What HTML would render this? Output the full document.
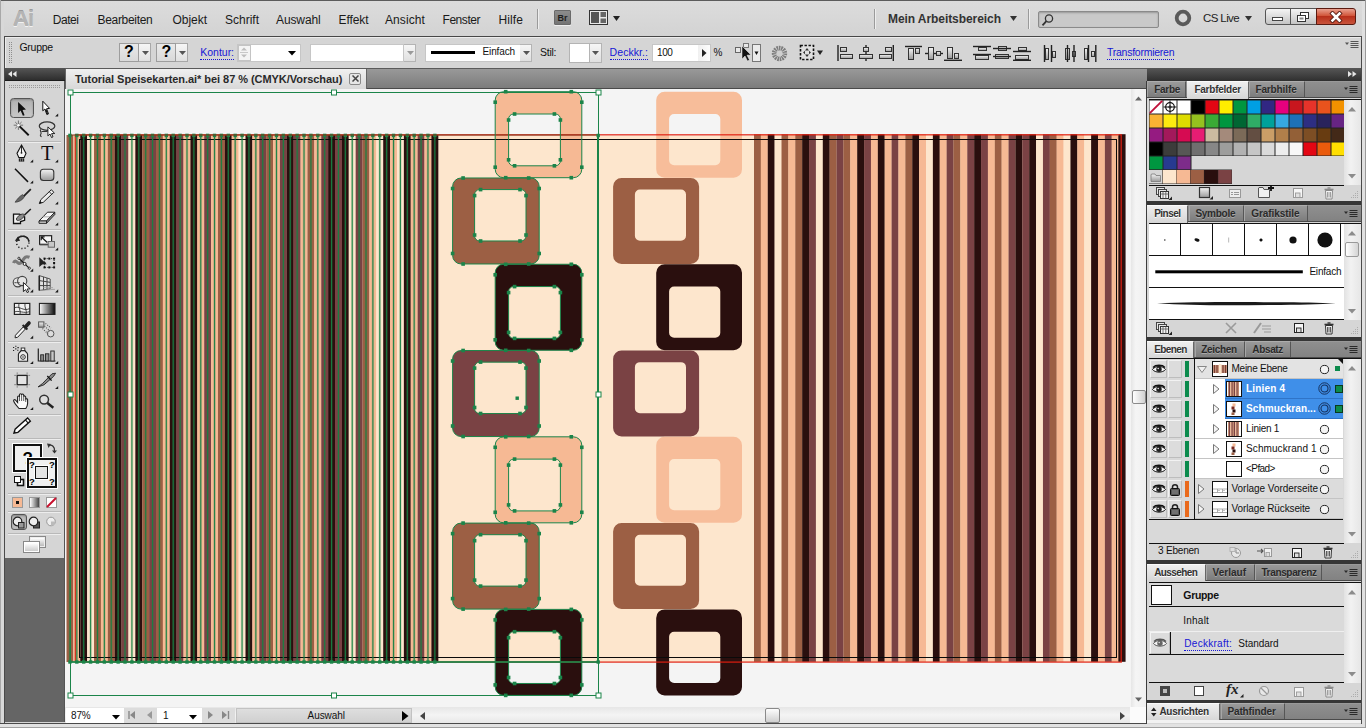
<!DOCTYPE html><html lang="de"><head><meta charset="utf-8"><title>Tutorial Speisekarten.ai</title><style>
*{box-sizing:border-box;margin:0;padding:0}
html,body{width:1366px;height:728px;overflow:hidden;background:#d6d6d6;font-family:"Liberation Sans",sans-serif;font-size:11px;color:#111}
.a{position:absolute}
.t{position:absolute;white-space:nowrap;line-height:1}
.menu{color:#1a1a1a}
.cb{font-size:10.5px;color:#111}
.lnk{color:#1414d8;border-bottom:1px dotted #1414d8;padding-bottom:1px}
.tab{position:absolute;height:17px;font-size:11px;font-weight:bold;color:#2e2e2e;padding-top:3px;text-align:center;letter-spacing:-0.2px;background:linear-gradient(#8e8e8e,#777);border-right:1px solid #5a5a5a;border-top:1px solid #9c9c9c}
.tab.on{background:linear-gradient(#ececec,#d6d6d6);color:#222;border-top:1px solid #f4f4f4;border-right:1px solid #777}
.tabrow{position:absolute;left:1147px;width:214px;height:17px;background:linear-gradient(#858585,#6f6f6f);border-top:1px solid #999}
.pbody{position:absolute;left:1147px;width:214px;background:#d6d6d6}
.gap{position:absolute;left:1147px;width:214px;background:#4a4a4a}
.lrow{position:absolute;left:1149px;width:194px;height:20px}
.ltxt{position:absolute;white-space:nowrap;line-height:1;font-size:11px;top:5px;color:#111}
.wf{position:absolute;background:#fff;border:1px solid #b4b4b4;border-top-color:#9a9a9a}
.dd{position:absolute;background:linear-gradient(#fafafa,#e2e2e2);border:1px solid #b4b4b4}
</style></head><body>
<div class="a" style="left:0px;top:0px;width:1366px;height:728px;background:#d6d6d6"></div>
<div class="a" style="left:0px;top:0px;width:1366px;height:1px;background:#5c5c5c"></div>
<div class="a" style="left:0px;top:1px;width:1366px;height:35px;background:linear-gradient(#dcdcdc,#d3d3d3)"></div>
<div class="a" style="left:0px;top:36px;width:1366px;height:1px;background:#474747"></div>
<div class="a" style="left:0px;top:37px;width:1366px;height:1px;background:#ececec"></div>
<div class="a" style="left:0px;top:38px;width:1366px;height:30px;background:#d5d5d5"></div>
<div class="t " style="left:13px;top:8px;font-size:22px;font-weight:bold;color:#b4b4b4;letter-spacing:-1px;text-shadow:0 1px 0 #f2f2f2,0 -1px 0 #9a9a9a">Ai</div>
<div class="t menu" style="left:52.8px;top:13.5px;font-size:12px;letter-spacing:-0.48px;">Datei</div>
<div class="t menu" style="left:97.6px;top:13.5px;font-size:12px;letter-spacing:-0.33px;">Bearbeiten</div>
<div class="t menu" style="left:172.5px;top:13.5px;font-size:12px;letter-spacing:-0.03px;">Objekt</div>
<div class="t menu" style="left:225px;top:13.5px;font-size:12px;letter-spacing:-0.00px;">Schrift</div>
<div class="t menu" style="left:276px;top:13.5px;font-size:12px;letter-spacing:-0.11px;">Auswahl</div>
<div class="t menu" style="left:338.5px;top:13.5px;font-size:12px;letter-spacing:-0.08px;">Effekt</div>
<div class="t menu" style="left:385px;top:13.5px;font-size:12px;letter-spacing:0.09px;">Ansicht</div>
<div class="t menu" style="left:442.5px;top:13.5px;font-size:12px;letter-spacing:-0.45px;">Fenster</div>
<div class="t menu" style="left:498.5px;top:13.5px;font-size:12px;letter-spacing:0.10px;">Hilfe</div>
<div class="a" style="left:537px;top:9px;width:1px;height:20px;background:#9a9a9a"></div>
<div class="a" style="left:538px;top:9px;width:1px;height:20px;background:#eee"></div>
<div class="a" style="left:554px;top:10px;width:17px;height:15px;background:linear-gradient(#8c8c8c,#747474);border:1px solid #6a6a6a;border-radius:1px;box-shadow:0 1px 0 #eee"></div>
<div class="t " style="left:557.5px;top:13.5px;font-size:9px;font-weight:bold;color:#1e1e1e">Br</div>
<svg class="a" style="left:589px;top:10px" width="19" height="15" viewBox="0 0 19 15"><rect x="0.5" y="0.5" width="18" height="14" fill="#e8e8e8" stroke="#333"/><rect x="2" y="2" width="8" height="11" fill="#555"/><rect x="11.5" y="2" width="5.5" height="5" fill="#666"/><rect x="11.5" y="8.5" width="5.5" height="4.5" fill="#666"/></svg>
<svg class="a" style="left:613px;top:16px" width="8" height="5"><path d="M0 0H7L3.5 5Z" fill="#222"/></svg>
<div class="a" style="left:874px;top:9px;width:1px;height:20px;background:#9a9a9a"></div>
<div class="a" style="left:875px;top:9px;width:1px;height:20px;background:#eee"></div>
<div class="t " style="left:888px;top:13px;font-size:12px;font-weight:bold;letter-spacing:-0.07px;color:#333">Mein Arbeitsbereich</div>
<svg class="a" style="left:1010px;top:16px" width="8" height="5"><path d="M0 0H7L3.5 5Z" fill="#333"/></svg>
<div class="a" style="left:1028px;top:9px;width:1px;height:20px;background:#9a9a9a"></div>
<div class="a" style="left:1029px;top:9px;width:1px;height:20px;background:#eee"></div>
<div class="a" style="left:1038px;top:11px;width:121px;height:17px;background:#c9c9c9;border:1px solid #8a8a8a;border-radius:2px;box-shadow:inset 0 1px 2px #999"></div>
<svg class="a" style="left:1041px;top:13px" width="14" height="14" viewBox="0 0 14 14"><circle cx="8" cy="5.5" r="3.6" fill="none" stroke="#333" stroke-width="1.3"/><path d="M5.4 8.2L1.5 12.4" stroke="#333" stroke-width="1.8"/></svg>
<svg class="a" style="left:1173px;top:8px" width="20" height="20" viewBox="0 0 20 20"><circle cx="10" cy="10" r="6.300" fill="none" stroke="#5a5a5a" stroke-width="3.800"/></svg>
<div class="t " style="left:1203px;top:13px;font-size:11.5px;letter-spacing:-0.60px;color:#222">CS Live</div>
<svg class="a" style="left:1245px;top:16px" width="8" height="5"><path d="M0 0H7L3.5 5Z" fill="#333"/></svg>
<div class="a" style="left:1265px;top:8px;width:26px;height:17px;background:linear-gradient(#f4f4f4,#c4c4c4);border:1px solid #555;border-radius:3px 0 0 3px"></div>
<div class="a" style="left:1290px;top:8px;width:27px;height:17px;background:linear-gradient(#f4f4f4,#c4c4c4);border:1px solid #555"></div>
<div class="a" style="left:1316px;top:8px;width:40px;height:17px;background:linear-gradient(#e9a08f,#d1553a 45%,#b8301b 50%,#c8543c);border:1px solid #5a1a10;border-radius:0 3px 3px 0"></div>
<div class="a" style="left:1272px;top:17px;width:11px;height:4px;background:#fff;border:1px solid #444"></div>
<svg class="a" style="left:1296px;top:11px" width="14" height="12" viewBox="0 0 14 12"><rect x="4.5" y="1.5" width="8" height="6" fill="#fff" stroke="#333"/><rect x="1.5" y="4.5" width="8" height="6" fill="#fff" stroke="#333"/><rect x="3.5" y="6.5" width="4" height="2" fill="#888" stroke="none"/></svg>
<svg class="a" style="left:1329px;top:11px" width="14" height="12" viewBox="0 0 14 12"><path d="M3.500 2.500L10.500 9.500M10.500 2.500L3.500 9.500" stroke="#5a2018" stroke-width="4.400" stroke-linecap="square"/><path d="M3.500 2.500L10.500 9.500M10.500 2.500L3.500 9.500" stroke="#fff" stroke-width="2.600" stroke-linecap="square"/></svg>
<div class="a" style="left:5px;top:38px;width:1px;height:30px;background:#ececec"></div>
<div class="a" style="left:9px;top:42px;width:4px;height:22px;background-image:linear-gradient(90deg,#8e8e8e 1px,transparent 1px);background-size:2px 2px;-webkit-mask-image:linear-gradient(#8e8e8e 1px,transparent 1px);-webkit-mask-size:2px 2px;mask-image:linear-gradient(#000 1px,transparent 1px);mask-size:2px 2px"></div>
<div class="t " style="left:19.4px;top:42px;font-size:10.5px;letter-spacing:-0.24px;color:#111">Gruppe</div>
<div class="a" style="left:118.5px;top:43px;width:20px;height:19px;background:linear-gradient(#e9e9e9,#d9d9d9);border:1px solid #9d9d9d"></div>
<div class="t " style="left:124.0px;top:44px;font-size:16px;font-weight:bold;color:#000">?</div>
<div class="a" style="left:138.5px;top:43px;width:12px;height:19px;background:linear-gradient(#f6f6f6,#e0e0e0);border:1px solid #a8a8a8;border-left:none"></div>
<svg class="a" style="left:141.5px;top:51px" width="7" height="4"><path d="M0 0H7L3.5 4Z" fill="#555"/></svg>
<div class="a" style="left:156px;top:43px;width:20px;height:19px;background:linear-gradient(#e9e9e9,#d9d9d9);border:1px solid #9d9d9d"></div>
<div class="t " style="left:161.5px;top:44px;font-size:16px;font-weight:bold;color:#000">?</div>
<div class="a" style="left:176px;top:43px;width:12px;height:19px;background:linear-gradient(#f6f6f6,#e0e0e0);border:1px solid #a8a8a8;border-left:none"></div>
<svg class="a" style="left:179px;top:51px" width="7" height="4"><path d="M0 0H7L3.5 4Z" fill="#555"/></svg>
<div class="t " style="left:200.3px;top:47px;font-size:10.5px;letter-spacing:-0.02px;color:#1515d5;border-bottom:1px dotted #1515d5;padding-bottom:1px">Kontur:</div>
<div class="a" style="left:236.5px;top:43.5px;width:64px;height:18px;background:#fff;border:1px solid #c6c6c6"></div>
<div class="a" style="left:237.5px;top:44.5px;width:13px;height:16px;background:#f4f4f4;border:1px solid #c4c4c4"></div>
<svg class="a" style="left:240px;top:46px" width="8" height="13" viewBox="0 0 8 13"><path d="M1 4.5L4 1.5L7 4.5Z M1 8.5L4 11.5L7 8.5Z" fill="#bdbdbd"/><path d="M0 6.5H8" stroke="#c8c8c8"/></svg>
<svg class="a" style="left:288px;top:51px" width="8" height="5"><path d="M0 0H8L4 4.5Z" fill="#000"/></svg>
<div class="a" style="left:310.4px;top:43.5px;width:94px;height:18px;background:#fff;border:1px solid #c6c6c6"></div>
<div class="a" style="left:404px;top:43.5px;width:12px;height:18px;background:linear-gradient(#f6f6f6,#e0e0e0);border:1px solid #b4b4b4;border-left:none"></div>
<svg class="a" style="left:406.5px;top:51px" width="7" height="4"><path d="M0 0H7L3.5 4Z" fill="#9a9a9a"/></svg>
<div class="a" style="left:425px;top:43.5px;width:96px;height:18px;background:#fff;border:1px solid #c6c6c6"></div>
<div class="a" style="left:431px;top:51px;width:44px;height:3px;background:#000"></div>
<div class="t " style="left:482.5px;top:47px;font-size:10px;letter-spacing:-0.12px;">Einfach</div>
<div class="a" style="left:520px;top:43.5px;width:12px;height:18px;background:linear-gradient(#f6f6f6,#e0e0e0);border:1px solid #b4b4b4;border-left:none"></div>
<svg class="a" style="left:522.5px;top:51px" width="7" height="4"><path d="M0 0H7L3.5 4Z" fill="#555"/></svg>
<div class="t " style="left:540px;top:47px;font-size:10.5px;letter-spacing:-0.26px;">Stil:</div>
<div class="a" style="left:569.4px;top:42.5px;width:21px;height:20px;background:#fff;border:1px solid #b4b4b4"></div>
<div class="a" style="left:589.5px;top:42.5px;width:12px;height:20px;background:linear-gradient(#f6f6f6,#e0e0e0);border:1px solid #b4b4b4;border-left:none"></div>
<svg class="a" style="left:592px;top:51px" width="7" height="4"><path d="M0 0H7L3.5 4Z" fill="#555"/></svg>
<div class="t " style="left:609.6px;top:47px;font-size:10.5px;letter-spacing:0.07px;color:#1515d5;border-bottom:1px dotted #1515d5;padding-bottom:1px">Deckkr.:</div>
<div class="a" style="left:651.5px;top:43.5px;width:59px;height:18px;background:#fff;border:1px solid #c6c6c6"></div>
<div class="t " style="left:657px;top:47.5px;font-size:10px;letter-spacing:-0.40px;">100</div>
<div class="a" style="left:698px;top:44.5px;width:12px;height:16px;background:linear-gradient(90deg,#f0f0f0,#fdfdfd)"></div>
<svg class="a" style="left:702px;top:49px" width="5" height="8"><path d="M0 0L4.5 4L0 8Z" fill="#222"/></svg>
<div class="t " style="left:713.6px;top:47.5px;font-size:10px;letter-spacing:0.51px;">%</div>
<svg class="a" style="left:734px;top:43px" width="28" height="20" viewBox="0 0 28 20"><rect x="1.5" y="4.5" width="5" height="5" fill="#e8e8e8" stroke="#666"/><rect x="9.5" y="0.5" width="5" height="4" fill="#e8e8e8" stroke="#777"/><path d="M8 3L8 16L11 13L13.5 18L15.5 17L13 12.2L17 12Z" fill="#111" stroke="#eee" stroke-width=".5"/><rect x="18.5" y="1.5" width="8" height="17" fill="#ececec" stroke="#777"/><path d="M20.500 8.500H24.500L22.500 12Z" fill="#111"/></svg>
<svg class="a" style="left:771px;top:45px" width="17" height="17" viewBox="0 0 17 17"><circle cx="8.5" cy="8.5" r="5.400" fill="none" stroke="#7c7c7c" stroke-width="4.600" stroke-dasharray="1.500 .7"/><circle cx="8.5" cy="8.5" r="2.600" fill="#cfcfcf"/></svg>
<svg class="a" style="left:799px;top:44px" width="26" height="17" viewBox="0 0 26 17"><rect x="1.5" y="1.5" width="13" height="14" fill="#e0e0e0" stroke="#111" stroke-width="1.6" stroke-dasharray="2.4 1.6"/><path d="M8 4L10 6.5H6Z M8 13L10 10.5H6Z M4 8.5L6 6.8V10.2Z M12 8.5L10 6.8V10.2Z" fill="#333"/><path d="M18 6.5H24L21 11Z" fill="#222"/></svg>
<svg width="0" height="0" style="position:absolute"><defs><linearGradient id="gb" x1="0" y1="0" x2="0" y2="1"><stop offset="0" stop-color="#f4f4f4"/><stop offset="1" stop-color="#9a9a9a"/></linearGradient></defs></svg>
<svg class="a" style="left:837px;top:45px" width="17" height="17" viewBox="0 0 17 17"><path d="M1 0L1 16" stroke="#222" stroke-width="1.4"/><rect x="3.5" y="2.5" width="6" height="4" fill="url(#gb)" stroke="#333" stroke-width="1"/><rect x="3.5" y="9.5" width="12" height="4" fill="url(#gb)" stroke="#333" stroke-width="1"/></svg>
<svg class="a" style="left:858px;top:45px" width="17" height="17" viewBox="0 0 17 17"><path d="M8 0L8 16" stroke="#222" stroke-width="1.4"/><rect x="5.5" y="2.5" width="5" height="4" fill="url(#gb)" stroke="#333" stroke-width="1"/><rect x="1.5" y="9.5" width="13" height="4" fill="url(#gb)" stroke="#333" stroke-width="1"/></svg>
<svg class="a" style="left:878px;top:45px" width="17" height="17" viewBox="0 0 17 17"><path d="M15.3 0L15.3 16" stroke="#222" stroke-width="1.4"/><rect x="7.5" y="2.5" width="6" height="4" fill="url(#gb)" stroke="#333" stroke-width="1"/><rect x="1.5" y="9.5" width="12" height="4" fill="url(#gb)" stroke="#333" stroke-width="1"/></svg>
<svg class="a" style="left:905px;top:45px" width="17" height="17" viewBox="0 0 17 17"><path d="M0 1.5L17 1.5" stroke="#222" stroke-width="1.4"/><rect x="3.5" y="3.5" width="5" height="11" fill="url(#gb)" stroke="#333" stroke-width="1"/><rect x="10.5" y="3.5" width="4" height="5" fill="url(#gb)" stroke="#333" stroke-width="1"/></svg>
<svg class="a" style="left:925px;top:45px" width="18" height="17" viewBox="0 0 18 17"><path d="M0 8.5L18 8.5" stroke="#222" stroke-width="1.4"/><rect x="3.5" y="2.5" width="5" height="12" fill="url(#gb)" stroke="#333" stroke-width="1"/><rect x="11.5" y="6.5" width="4" height="4" fill="url(#gb)" stroke="#333" stroke-width="1"/></svg>
<svg class="a" style="left:944px;top:45px" width="18" height="17" viewBox="0 0 18 17"><path d="M0 15.3L18 15.3" stroke="#222" stroke-width="1.4"/><rect x="3.5" y="2.5" width="5" height="11" fill="url(#gb)" stroke="#333" stroke-width="1"/><rect x="10.5" y="8.5" width="4" height="5" fill="url(#gb)" stroke="#333" stroke-width="1"/></svg>
<svg class="a" style="left:973px;top:45px" width="18" height="17" viewBox="0 0 18 17"><path d="M0 1.5L18 1.5" stroke="#222" stroke-width="1.4"/><rect x="5.5" y="2.5" width="8" height="3" fill="url(#gb)" stroke="#333" stroke-width="1"/><path d="M0 9.5L18 9.5" stroke="#222" stroke-width="1.4"/><rect x="2.5" y="10.5" width="13" height="4" fill="url(#gb)" stroke="#333" stroke-width="1"/></svg>
<svg class="a" style="left:993px;top:45px" width="18" height="17" viewBox="0 0 18 17"><rect x="5.5" y="1.5" width="8" height="4" fill="url(#gb)" stroke="#333" stroke-width="1"/><path d="M0 3.5L18 3.5" stroke="#222" stroke-width="1.4"/><rect x="2.5" y="9.5" width="13" height="4" fill="url(#gb)" stroke="#333" stroke-width="1"/><path d="M0 11.5L18 11.5" stroke="#222" stroke-width="1.4"/></svg>
<svg class="a" style="left:1013px;top:45px" width="18" height="17" viewBox="0 0 18 17"><rect x="5.5" y="2.5" width="8" height="3" fill="url(#gb)" stroke="#333" stroke-width="1"/><path d="M0 6.5L18 6.5" stroke="#222" stroke-width="1.4"/><rect x="2.5" y="10.5" width="13" height="4" fill="url(#gb)" stroke="#333" stroke-width="1"/><path d="M0 15.3L18 15.3" stroke="#222" stroke-width="1.4"/></svg>
<svg class="a" style="left:1043px;top:45px" width="14" height="17" viewBox="0 0 14 17"><path d="M1.5 0L1.5 17" stroke="#222" stroke-width="1.4"/><rect x="2.5" y="3.5" width="3" height="11" fill="url(#gb)" stroke="#333" stroke-width="1"/><path d="M8.5 0L8.5 17" stroke="#222" stroke-width="1.4"/><rect x="9.5" y="6.5" width="3" height="6" fill="url(#gb)" stroke="#333" stroke-width="1"/></svg>
<svg class="a" style="left:1063px;top:45px" width="14" height="17" viewBox="0 0 14 17"><rect x="2.5" y="3.5" width="4" height="11" fill="url(#gb)" stroke="#333" stroke-width="1"/><path d="M4.5 0L4.5 17" stroke="#222" stroke-width="1.4"/><rect x="9.5" y="6.5" width="3" height="5" fill="url(#gb)" stroke="#333" stroke-width="1"/><path d="M11 0L11 17" stroke="#222" stroke-width="1.4"/></svg>
<svg class="a" style="left:1083px;top:45px" width="15" height="17" viewBox="0 0 15 17"><rect x="1.5" y="3.5" width="3" height="11" fill="url(#gb)" stroke="#333" stroke-width="1"/><path d="M5.5 0L5.5 17" stroke="#222" stroke-width="1.4"/><rect x="8.5" y="6.5" width="3" height="5" fill="url(#gb)" stroke="#333" stroke-width="1"/><path d="M12.8 0L12.8 17" stroke="#222" stroke-width="1.4"/></svg>
<div class="t " style="left:1107px;top:47px;font-size:10.5px;letter-spacing:-0.25px;color:#1515d5;border-bottom:1px dotted #1515d5;padding-bottom:1px">Transformieren</div>
<svg class="a" style="left:1345px;top:41px" width="14" height="8" viewBox="0 0 14 8"><path d="M0 1.5H4L2 4Z" fill="#555"/><path d="M5.5 .5H13.5M5.5 2.5H13.5M5.5 4.5H13.5M5.5 6.5H13.5" stroke="#555" stroke-width="1"/></svg>
<div class="a" style="left:0px;top:68px;width:1366px;height:20px;background:linear-gradient(#9a9a9a,#7c7c7c)"></div>
<div class="a" style="left:0px;top:88px;width:1366px;height:1px;background:#4a4a4a"></div>
<div class="a" style="left:5px;top:68px;width:1356px;height:1px;background:#5a5a5a"></div>
<div class="a" style="left:0px;top:0px;width:1px;height:728px;background:#a8a8a8"></div>
<div class="a" style="left:1px;top:1px;width:3px;height:727px;background:#d8d8d8"></div>
<div class="a" style="left:4px;top:36px;width:1px;height:688px;background:#4a4a4a"></div>
<div class="a" style="left:64.5px;top:69px;width:302px;height:19.5px;background:linear-gradient(#f0f0f0,#d8d8d8);border-right:1px solid #666;border-left:1px solid #666"></div>
<div class="t " style="left:75px;top:73.5px;font-size:11px;font-weight:bold;letter-spacing:-0.05px;color:#2a2a2a">Tutorial Speisekarten.ai* bei 87 % (CMYK/Vorschau)</div>
<div class="a" style="left:349px;top:72.5px;width:12px;height:12px;border:1px solid #8a8a8a;background:#e6e6e6;border-radius:2px"></div>
<svg class="a" style="left:351.5px;top:75px" width="7" height="7"><path d="M.5 .5L6.5 6.5M6.5 .5L.5 6.5" stroke="#444" stroke-width="1.5"/></svg>
<div class="a" style="left:5px;top:68px;width:59.5px;height:13px;background:linear-gradient(#555,#2e2e2e);border-bottom:1px solid #1c1c1c"></div>
<svg class="a" style="left:8px;top:71px" width="9" height="7"><path d="M4 0V6L0 3Z M8.5 0V6L4.5 3Z" fill="#e8e8e8"/></svg>
<div class="a" style="left:5px;top:81px;width:59.5px;height:477px;background:#d5d5d5"></div>
<div class="a" style="left:5px;top:558px;width:59.5px;height:164px;background:#656565"></div>
<div class="a" style="left:64px;top:81px;width:1px;height:641px;background:#555"></div>
<div class="a" style="left:9px;top:85px;width:52px;height:4px;background-image:linear-gradient(90deg,#9a9a9a 1px,transparent 1px);background-size:2px 2px;-webkit-mask-image:linear-gradient(#9a9a9a 1px,transparent 1px);-webkit-mask-size:2px 2px;mask-image:linear-gradient(#000 1px,transparent 1px);mask-size:2px 2px"></div>
<div class="a" style="left:8px;top:140.5px;width:53px;height:1px;background:#b9b9b9"></div>
<div class="a" style="left:8px;top:141.5px;width:53px;height:1px;background:#ededed"></div>
<div class="a" style="left:8px;top:228.5px;width:53px;height:1px;background:#b9b9b9"></div>
<div class="a" style="left:8px;top:229.5px;width:53px;height:1px;background:#ededed"></div>
<div class="a" style="left:8px;top:295px;width:53px;height:1px;background:#b9b9b9"></div>
<div class="a" style="left:8px;top:296px;width:53px;height:1px;background:#ededed"></div>
<div class="a" style="left:8px;top:340.5px;width:53px;height:1px;background:#b9b9b9"></div>
<div class="a" style="left:8px;top:341.5px;width:53px;height:1px;background:#ededed"></div>
<div class="a" style="left:8px;top:366.5px;width:53px;height:1px;background:#b9b9b9"></div>
<div class="a" style="left:8px;top:367.5px;width:53px;height:1px;background:#ededed"></div>
<div class="a" style="left:8px;top:413.5px;width:53px;height:1px;background:#b9b9b9"></div>
<div class="a" style="left:8px;top:414.5px;width:53px;height:1px;background:#ededed"></div>
<div class="a" style="left:8px;top:437.5px;width:53px;height:1px;background:#b9b9b9"></div>
<div class="a" style="left:8px;top:438.5px;width:53px;height:1px;background:#ededed"></div>
<div class="a" style="left:8px;top:493px;width:53px;height:1px;background:#b9b9b9"></div>
<div class="a" style="left:8px;top:494px;width:53px;height:1px;background:#ededed"></div>
<div class="a" style="left:8px;top:511px;width:53px;height:1px;background:#b9b9b9"></div>
<div class="a" style="left:8px;top:512px;width:53px;height:1px;background:#ededed"></div>
<div class="a" style="left:8px;top:533px;width:53px;height:1px;background:#b9b9b9"></div>
<div class="a" style="left:8px;top:534px;width:53px;height:1px;background:#ededed"></div>
<div class="a" style="left:10.2px;top:98.1px;width:23.7px;height:19.6px;background:linear-gradient(#b2b2b2,#c8c8c8);border:1px solid #555;border-radius:3.5px;box-shadow:inset 0 1px 2px #8a8a8a"></div>
<svg class="a" style="left:5px;top:81px" width="59" height="477" viewBox="5 81 59 477"><defs><linearGradient id="gh"><stop offset="0" stop-color="#fff"/><stop offset="1" stop-color="#0a0a0a"/></linearGradient></defs><path d="M58.2 113.5V116.6H55.1Z" fill="#1a1a1a"/><path d="M33.2 159.5V162.6H30.1Z" fill="#1a1a1a"/><path d="M58.2 159.5V162.6H55.1Z" fill="#1a1a1a"/><path d="M33.2 180.5V183.6H30.1Z" fill="#1a1a1a"/><path d="M58.2 180.5V183.6H55.1Z" fill="#1a1a1a"/><path d="M58.2 201.5V204.6H55.1Z" fill="#1a1a1a"/><path d="M58.2 222.5V225.6H55.1Z" fill="#1a1a1a"/><path d="M33.2 247.5V250.6H30.1Z" fill="#1a1a1a"/><path d="M58.2 247.5V250.6H55.1Z" fill="#1a1a1a"/><path d="M33.2 268.59999999999997V271.7H30.1Z" fill="#1a1a1a"/><path d="M33.2 289.29999999999995V292.4H30.1Z" fill="#1a1a1a"/><path d="M58.2 289.29999999999995V292.4H55.1Z" fill="#1a1a1a"/><path d="M33.2 335.59999999999997V338.7H30.1Z" fill="#1a1a1a"/><path d="M33.2 360.9V364H30.1Z" fill="#1a1a1a"/><path d="M58.2 360.9V364H55.1Z" fill="#1a1a1a"/><path d="M58.2 385.9V389H55.1Z" fill="#1a1a1a"/><path d="M33.2 406.9V410H30.1Z" fill="#1a1a1a"/><path d="M18.1 101.9V112.9L20.6 110.6L22.9 115.8L24.6 115.2L22.6 110L26 109.6Z" fill="#111"/><path d="M42.8 101.2V110.8L44.9 109L46.8 114.5L48.5 113.9L46.6 108.7L49.6 108.4Z" fill="#fff" stroke="#111" stroke-width="1"/><path d="M45.3 109.5L46.9 114.2L48.1 113.8L46.5 109.2Z" fill="#111"/><path d="M18.4 120.5V129.9M13.7 125.2H23.1M15.2 122L21.6 128.4M21.6 122L15.2 128.4" stroke="#666" stroke-width=".9"/><circle cx="18.4" cy="125.2" r="1.3" fill="#fff"/><path d="M19.6 126.4L28.7 135.2" stroke="#111" stroke-width="1.9"/><ellipse cx="47.05" cy="126.1" rx="7.8" ry="4.2" fill="none" stroke="#333" stroke-width="1.2"/><path d="M40.8 129.3C39 131 42.4 132.4 40.8 134.2C40 135.4 40.4 136.4 41.6 136.6" fill="none" stroke="#333" stroke-width="1.1"/><path d="M41.5 131.5H47.5" stroke="#333" stroke-width="1"/><path d="M47.9 126.9V135.9L50 134L51.5 137.5L53 136.9L51.6 133.6L54.8 133.5Z" fill="#fff" stroke="#111" stroke-width=".9"/><path d="M21.5 145.1L26 153.4L24.2 157.5H18.8L17 153.4Z" fill="#f4f4f4" stroke="#111" stroke-width="1.1"/><path d="M21.5 146V152" stroke="#111" stroke-width=".9"/><circle cx="21.5" cy="152.8" r=".9" fill="#111"/><rect x="18.8" y="158.300" width="5.400" height="3.300" fill="#222"/><path d="M20.5 158.300V161.600M22.500 158.300V161.600" stroke="#aaa" stroke-width=".6"/><text x="41" y="160.200" font-family="Liberation Serif,serif" font-size="20.300" fill="#111">T</text><path d="M15 168.8L28 181.9" stroke="#111" stroke-width="1.5"/><rect x="40.400" y="169.200" width="13.400" height="11.300" rx="3" fill="url(#gb)" stroke="#333" stroke-width="1.1"/><path d="M30.8 189.100L23.600 196.300" stroke="#222" stroke-width="1.800"/><path d="M24.600 196.400L22.600 194.600C19.500 196 17 199.500 15 202.200C18.500 202.200 22.800 200.200 24.600 196.400Z" fill="#666" stroke="#333" stroke-width=".6"/><path d="M51.400 189.700L53.800 192.300L43.300 202.300L39.300 203.600L40.800 199.700Z" fill="#ececec" stroke="#222" stroke-width="1"/><path d="M39.300 203.600L40.300 201L42 202.700Z" fill="#111"/><path d="M49.300 191.700L51.700 194.300" stroke="#222" stroke-width=".9"/><path d="M13.500 214.200H19.500L24.600 216.800V220.300L20.500 221.600V223.500H13.500Z" fill="#f2f2f2" stroke="#111" stroke-width="1.300"/><ellipse cx="20.300" cy="217.300" rx="4.600" ry="2.100" transform="rotate(-35 20.300 217.300)" fill="#8a8a8a" stroke="#333" stroke-width=".8"/><path d="M30.800 209L24.500 215" stroke="#222" stroke-width="1.600"/><path d="M39 221L47.500 212.200H54.800L46.500 221Z" fill="#f8f8f8" stroke="#222" stroke-width="1"/><path d="M39 221H46.500V223.300H39Z" fill="#ddd" stroke="#222" stroke-width="1"/><path d="M46.500 221L54.800 212.200V214.500L46.500 223.300Z" fill="#999" stroke="#222" stroke-width="1"/><path d="M43 216.800H50.400" stroke="#999" stroke-width=".8"/><circle cx="22.750" cy="242.400" r="6.200" fill="none" stroke="#222" stroke-width="1.500" stroke-dasharray="1.200 2.050"/><path d="M16.800 240.600A6.200 6.200 0 0 1 28.900 241.600" fill="none" stroke="#222" stroke-width="1.500"/><path d="M14.800 240.800L18.200 236.300L20 241Z" fill="#222"/><rect x="39.600" y="235.700" width="12" height="8.600" fill="#f6f6f6" stroke="#222" stroke-width="1.200"/><path d="M39.600 244.900H51.600" stroke="#555" stroke-width="1"/><rect x="48.200" y="241.500" width="6.300" height="5.700" fill="#c8c8c8" stroke="#666" stroke-width="1"/><path d="M41.600 237.300L47.300 242.500M41.200 240.300V236.900H44.600" fill="none" stroke="#111" stroke-width="1.200"/><path d="M13.500 263C16 257 18 267 21.500 262C24.500 258 25 255.500 29.500 257.300" fill="none" stroke="#7a7a7a" stroke-width="3.200"/><path d="M18.900 258.300L29.400 268.300" stroke="#111" stroke-width="1.100"/><circle cx="18.900" cy="258.300" r="1.100" fill="#eee" stroke="#111" stroke-width=".8"/><circle cx="24.600" cy="263.900" r="1.500" fill="#fff" stroke="#111" stroke-width=".9"/><circle cx="29.300" cy="268.200" r="1.100" fill="#eee" stroke="#111" stroke-width=".8"/><rect x="44.500" y="258.600" width="9.600" height="8.800" fill="none" stroke="#111" stroke-width=".9" stroke-dasharray="1 1.200"/><rect x="43.5" y="257.6" width="2" height="2" fill="#111"/><rect x="43.5" y="262.0" width="2" height="2" fill="#111"/><rect x="43.5" y="266.4" width="2" height="2" fill="#111"/><rect x="48.3" y="257.6" width="2" height="2" fill="#111"/><rect x="48.3" y="266.4" width="2" height="2" fill="#111"/><rect x="53.1" y="257.6" width="2" height="2" fill="#111"/><rect x="53.1" y="262.0" width="2" height="2" fill="#111"/><rect x="53.1" y="266.4" width="2" height="2" fill="#111"/><path d="M39.300 257.300V267L42.200 264.600L46.800 264.300Z" fill="#222"/><circle cx="17.800" cy="282.300" r="4.600" fill="#e4e4e4" stroke="#444" stroke-width="1.100"/><circle cx="22.200" cy="281" r="4.600" fill="#e4e4e4" stroke="#444" stroke-width="1.100"/><path d="M14.600 282.600H19.600" stroke="#333" stroke-width="1.300" stroke-dasharray="1.100 .8"/><path d="M23.400 282.500V291.600L25.600 289.600L27.200 292.600L28.600 292L27.100 289L30.200 288.800Z" fill="#fff" stroke="#111" stroke-width=".9"/><path d="M39.300 275.600L50.200 279V288.800L39.300 290.500Z" fill="#e2e2e2" stroke="#444" stroke-width=".9"/><path d="M39.300 280.600L50.200 282.300M39.300 285.600L50.200 285.600M43.500 276.900V289.900M47 278V289.300" stroke="#444" stroke-width="1"/><path d="M39.300 290.500L55 289.300M43 287.700H53" stroke="#999" stroke-width=".8"/><path d="M39.300 275.600V290.500" stroke="#222" stroke-width="1.500"/><rect x="14.400" y="303.400" width="15.400" height="11" fill="#f2f2f2" stroke="#222" stroke-width="1.200"/><path d="M14.400 308C19 305 23 312 29.800 308.500M19 303.400C17.500 307 21.500 311 20 314.400M25 303.400C24 307 27.500 311 26 314.400M14.400 312C19 310 24 314 29.800 311.500" fill="none" stroke="#333" stroke-width=".9"/><rect x="39.400" y="303.400" width="15.600" height="11" fill="url(#gh)" stroke="#222" stroke-width="1.100"/><path d="M23.200 327L25.400 329L17.600 337.300L15.100 337.800L15.400 335.300Z" fill="#f4f4f4" stroke="#222" stroke-width="1"/><path d="M29 323L25.800 326.400" stroke="#222" stroke-width="3.600" stroke-linecap="round"/><path d="M22.600 325.100L27.400 329.500" stroke="#222" stroke-width="2"/><rect x="38.600" y="321.900" width="5.300" height="5.300" fill="url(#gb)" stroke="#555" stroke-width="1"/><circle cx="50.650" cy="333.650" r="3.300" fill="#dcdcdc" stroke="#555" stroke-width="1"/><path d="M45.500 323.500L51 328M42.500 328.500L48.500 334.500M44.500 326L50 331" stroke="#555" stroke-width="1.100" stroke-dasharray="1 1.300"/><path d="M18.400 361.300V354.500C18.400 352.500 20.500 352 21.200 350.600H24.800C25.500 352 27.600 352.500 27.600 354.500V361.300Z" fill="#ececec" stroke="#222" stroke-width="1.100"/><rect x="21.200" y="348" width="3.600" height="2.600" fill="#fff" stroke="#222" stroke-width=".9"/><circle cx="23" cy="357" r="2.300" fill="#fff" stroke="#222" stroke-width="1"/><circle cx="23" cy="357" r=".8" fill="#222"/><path d="M13 347.500H14.200M15.200 346.300H16.400M15.200 348.900H16.400M13 350.500H14.200M17.400 347.600H18.800M17.200 350.200H18.400" stroke="#222" stroke-width="1.100"/><path d="M38.300 348.500V361H55.500" fill="none" stroke="#222" stroke-width="1.200"/><rect x="40.700" y="354.800" width="3" height="6.200" fill="#8a8a8a" stroke="#222" stroke-width=".9"/><rect x="45.500" y="353.800" width="3.400" height="7.200" fill="#8a8a8a" stroke="#222" stroke-width=".9"/><rect x="50.800" y="351" width="3.400" height="10" fill="#c8c8c8" stroke="#222" stroke-width=".9"/><rect x="17.200" y="375.400" width="9.900" height="9.300" fill="#e4e4e4" stroke="#222" stroke-width="1.300"/><path d="M17.200 372.400V374.200M27.100 372.400V374.200M17.200 385.900V387.700M27.100 385.900V387.700M14.200 375.400H16M14.200 384.700H16M28.300 375.400H30.100M28.300 384.700H30.100" stroke="#888" stroke-width="1"/><path d="M55.600 373.200L52 373.800L42.500 383.500L38.100 386.900L44 384.800L53.500 376.500Z" fill="#8a8a8a" stroke="#222" stroke-width=".9"/><path d="M47.300 376L51.600 380.600" stroke="#111" stroke-width="1.300"/><path d="M19 408.500C16.500 405.500 14 402.500 13.600 400.800C13.400 399.600 14.800 399.300 15.600 400.200L17.600 402.600V397C17.600 395.600 19.400 395.600 19.500 397V394.800C19.500 393.300 21.500 393.300 21.600 394.800V394.900C21.700 393.600 23.600 393.600 23.700 395V396.800C23.800 395.600 25.600 395.600 25.700 397V399.500C25.800 398.400 27.500 398.400 27.600 399.600V403.500C27.600 405.500 26.800 407 25.800 408.500Z" fill="#fafafa" stroke="#222" stroke-width="1.100"/><path d="M19.500 397V401M21.600 395V401M23.700 396.500V401M25.700 399V402" stroke="#222" stroke-width=".7"/><circle cx="44.100" cy="399.600" r="4.400" fill="#dedede" stroke="#333" stroke-width="1.500"/><path d="M47.400 403L53.300 407.800" stroke="#222" stroke-width="2.400"/><path d="M27.600 417.900L30.400 421.100L17.900 432.300L13.900 433.100L15.100 429.200Z" fill="#fff" stroke="#111" stroke-width="1.300"/><path d="M25.400 419.900L28.200 423.100" stroke="#111" stroke-width="1.100"/><path d="M13.900 433.100L14.600 430.900L16.200 432.500Z" fill="#111"/></svg>
<div class="a" style="left:13px;top:444px;width:29px;height:28px;background:#f0f0f0;border:2px solid #111;box-shadow:0 0 0 1px #fff"></div>
<div class="t " style="left:22.5px;top:450px;font-size:17px;font-weight:bold;color:#000">?</div>
<div class="a" style="left:26.5px;top:458px;width:30px;height:29.5px;background:#f0f0f0;border:2px solid #111;box-shadow:0 0 0 1px #fff"></div>
<div class="a" style="left:35px;top:466px;width:13px;height:13px;background:#e4e4e4;border:1px solid #111;box-shadow:0 0 0 1px #fff"></div>
<div class="t " style="left:29px;top:459.5px;font-size:9.5px;font-weight:bold;color:#000">?</div>
<div class="t " style="left:49px;top:459.5px;font-size:9.5px;font-weight:bold;color:#000">?</div>
<div class="t " style="left:29px;top:476.5px;font-size:9.5px;font-weight:bold;color:#000">?</div>
<div class="t " style="left:49px;top:476.5px;font-size:9.5px;font-weight:bold;color:#000">?</div>
<svg class="a" style="left:46px;top:442px" width="12" height="12" viewBox="0 0 12 12"><path d="M2.500 3.500C6 2 9 5 8.500 9" fill="none" stroke="#333" stroke-width="1.300"/><path d="M1 1.500L5 2L2.500 6Z M6 8.500H11L8.500 11.500Z" fill="#333"/></svg>
<svg class="a" style="left:13px;top:475px" width="12" height="12" viewBox="0 0 12 12"><rect x="4.500" y="4.500" width="6" height="6" fill="#fff" stroke="#111" stroke-width="1.600"/><rect x="1.500" y="1.500" width="6" height="6" fill="#fff" stroke="#111"/></svg>
<div class="a" style="left:11.5px;top:496.5px;width:11px;height:11px;background:#f6b994;border:1px solid #999"></div>
<div class="a" style="left:15.5px;top:500.5px;width:3px;height:3px;background:#111"></div>
<div class="a" style="left:28.5px;top:496.5px;width:11px;height:11px;background:linear-gradient(90deg,#fff,#444);border:1px solid #999"></div>
<svg class="a" style="left:46px;top:496.500px" width="11" height="11"><rect x=".5" y=".5" width="10" height="10" fill="#fff" stroke="#999"/><path d="M1 10L10 1" stroke="#c8102e" stroke-width="2"/></svg>
<div class="a" style="left:10.5px;top:514px;width:16px;height:16px;background:#bdbdbd;border:1px solid #555;border-radius:3px;box-shadow:inset 0 1px 2px #888"></div>
<svg class="a" style="left:11px;top:514.500px" width="15" height="15" viewBox="0 0 15 15"><circle cx="6.500" cy="6.500" r="4.300" fill="#eee" stroke="#222" stroke-width="1.200"/><rect x="7.500" y="7.500" width="5.500" height="5.500" fill="#999" stroke="#222"/></svg>
<svg class="a" style="left:27px;top:514.500px" width="15" height="15" viewBox="0 0 15 15"><rect x="6.500" y="7" width="6" height="6" fill="#555" stroke="#222"/><circle cx="6.500" cy="6.500" r="4.300" fill="#eee" stroke="#222" stroke-width="1.200"/></svg>
<svg class="a" style="left:44px;top:514.500px" width="15" height="15" viewBox="0 0 15 15"><circle cx="7" cy="6.500" r="4.300" fill="#eee" stroke="#999" stroke-width="1"/><path d="M7 6.500H11.300A4.300 4.300 0 0 1 7 10.800Z" fill="#bbb"/></svg>
<div class="a" style="left:30px;top:537px;width:15px;height:10px;background:linear-gradient(#fff,#bbb);border:1px solid #eee;box-shadow:0 0 0 1px #888"></div>
<div class="a" style="left:23.5px;top:542px;width:15px;height:10px;background:linear-gradient(#fff,#ccc);border:1px solid #fff;box-shadow:0 0 0 1px #888"></div>
<svg class="a" style="left:65px;top:89px" width="1066" height="618" viewBox="65 89 1066 618"><rect x="65" y="89" width="1066" height="618" fill="#f4f4f4"/><rect x="75" y="135.400" width="1046" height="526.600" fill="#fde6cd"/><rect x="66.50" y="135" width="6.935" height="527" fill="#9c5f44"/><rect x="73.39" y="135" width="6.935" height="527" fill="#f6b994"/><rect x="80.27" y="135" width="6.935" height="527" fill="#2a0f0e"/><rect x="87.16" y="135" width="6.935" height="527" fill="#fde6cd"/><rect x="94.04" y="135" width="6.935" height="527" fill="#9c5f44"/><rect x="100.92" y="135" width="6.935" height="527" fill="#f6b994"/><rect x="107.81" y="135" width="6.935" height="527" fill="#9c5f44"/><rect x="114.69" y="135" width="6.935" height="527" fill="#2a0f0e"/><rect x="121.58" y="135" width="6.935" height="527" fill="#7a4244"/><rect x="128.47" y="135" width="6.935" height="527" fill="#fde6cd"/><rect x="135.35" y="135" width="6.935" height="527" fill="#2a0f0e"/><rect x="142.24" y="135" width="6.935" height="527" fill="#9c5f44"/><rect x="149.12" y="135" width="6.935" height="527" fill="#7a4244"/><rect x="156.00" y="135" width="6.935" height="527" fill="#9c5f44"/><rect x="162.89" y="135" width="6.935" height="527" fill="#f6b994"/><rect x="169.77" y="135" width="6.935" height="527" fill="#2a0f0e"/><rect x="176.66" y="135" width="6.935" height="527" fill="#7a4244"/><rect x="183.55" y="135" width="6.935" height="527" fill="#f6b994"/><rect x="190.43" y="135" width="6.935" height="527" fill="#2a0f0e"/><rect x="197.31" y="135" width="6.935" height="527" fill="#f6b994"/><rect x="204.20" y="135" width="6.935" height="527" fill="#7a4244"/><rect x="211.09" y="135" width="6.935" height="527" fill="#f6b994"/><rect x="217.97" y="135" width="6.935" height="527" fill="#9c5f44"/><rect x="224.85" y="135" width="6.935" height="527" fill="#2a0f0e"/><rect x="231.74" y="135" width="6.935" height="527" fill="#f6b994"/><rect x="238.62" y="135" width="6.935" height="527" fill="#fde6cd"/><rect x="245.51" y="135" width="6.935" height="527" fill="#2a0f0e"/><rect x="252.39" y="135" width="6.935" height="527" fill="#f6b994"/><rect x="259.28" y="135" width="6.935" height="527" fill="#7a4244"/><rect x="266.16" y="135" width="6.935" height="527" fill="#9c5f44"/><rect x="273.05" y="135" width="6.935" height="527" fill="#f6b994"/><rect x="279.94" y="135" width="6.935" height="527" fill="#7a4244"/><rect x="286.82" y="135" width="6.935" height="527" fill="#2a0f0e"/><rect x="293.70" y="135" width="6.935" height="527" fill="#7a4244"/><rect x="300.59" y="135" width="6.935" height="527" fill="#f6b994"/><rect x="307.48" y="135" width="6.935" height="527" fill="#9c5f44"/><rect x="314.36" y="135" width="6.935" height="527" fill="#f6b994"/><rect x="321.25" y="135" width="6.935" height="527" fill="#7a4244"/><rect x="328.13" y="135" width="6.935" height="527" fill="#2a0f0e"/><rect x="335.01" y="135" width="6.935" height="527" fill="#7a4244"/><rect x="341.90" y="135" width="6.935" height="527" fill="#2a0f0e"/><rect x="348.78" y="135" width="6.935" height="527" fill="#fde6cd"/><rect x="355.67" y="135" width="6.935" height="527" fill="#7a4244"/><rect x="362.56" y="135" width="6.935" height="527" fill="#9c5f44"/><rect x="369.44" y="135" width="6.935" height="527" fill="#f6b994"/><rect x="376.32" y="135" width="6.935" height="527" fill="#fde6cd"/><rect x="383.21" y="135" width="6.935" height="527" fill="#2a0f0e"/><rect x="390.09" y="135" width="6.935" height="527" fill="#f6b994"/><rect x="396.98" y="135" width="6.935" height="527" fill="#fde6cd"/><rect x="403.87" y="135" width="6.935" height="527" fill="#2a0f0e"/><rect x="410.75" y="135" width="6.935" height="527" fill="#f6b994"/><rect x="417.63" y="135" width="6.935" height="527" fill="#7a4244"/><rect x="424.52" y="135" width="6.935" height="527" fill="#f6b994"/><rect x="431.40" y="135" width="6.935" height="527" fill="#2a0f0e"/><rect x="754.00" y="134.200" width="6.930" height="527.600" fill="#9c5f44"/><rect x="760.88" y="134.200" width="6.930" height="527.600" fill="#f6b994"/><rect x="767.76" y="134.200" width="6.930" height="527.600" fill="#2a0f0e"/><rect x="774.64" y="134.200" width="6.930" height="527.600" fill="#fde6cd"/><rect x="781.52" y="134.200" width="6.930" height="527.600" fill="#9c5f44"/><rect x="788.40" y="134.200" width="6.930" height="527.600" fill="#f6b994"/><rect x="795.28" y="134.200" width="6.930" height="527.600" fill="#9c5f44"/><rect x="802.16" y="134.200" width="6.930" height="527.600" fill="#2a0f0e"/><rect x="809.04" y="134.200" width="6.930" height="527.600" fill="#7a4244"/><rect x="815.92" y="134.200" width="6.930" height="527.600" fill="#fde6cd"/><rect x="822.80" y="134.200" width="6.930" height="527.600" fill="#2a0f0e"/><rect x="829.68" y="134.200" width="6.930" height="527.600" fill="#9c5f44"/><rect x="836.56" y="134.200" width="6.930" height="527.600" fill="#7a4244"/><rect x="843.44" y="134.200" width="6.930" height="527.600" fill="#9c5f44"/><rect x="850.32" y="134.200" width="6.930" height="527.600" fill="#f6b994"/><rect x="857.20" y="134.200" width="6.930" height="527.600" fill="#2a0f0e"/><rect x="864.08" y="134.200" width="6.930" height="527.600" fill="#7a4244"/><rect x="870.96" y="134.200" width="6.930" height="527.600" fill="#f6b994"/><rect x="877.84" y="134.200" width="6.930" height="527.600" fill="#2a0f0e"/><rect x="884.72" y="134.200" width="6.930" height="527.600" fill="#f6b994"/><rect x="891.60" y="134.200" width="6.930" height="527.600" fill="#7a4244"/><rect x="898.48" y="134.200" width="6.930" height="527.600" fill="#f6b994"/><rect x="905.36" y="134.200" width="6.930" height="527.600" fill="#9c5f44"/><rect x="912.24" y="134.200" width="6.930" height="527.600" fill="#2a0f0e"/><rect x="919.12" y="134.200" width="6.930" height="527.600" fill="#f6b994"/><rect x="926.00" y="134.200" width="6.930" height="527.600" fill="#fde6cd"/><rect x="932.88" y="134.200" width="6.930" height="527.600" fill="#2a0f0e"/><rect x="939.76" y="134.200" width="6.930" height="527.600" fill="#f6b994"/><rect x="946.64" y="134.200" width="6.930" height="527.600" fill="#7a4244"/><rect x="953.52" y="134.200" width="6.930" height="527.600" fill="#9c5f44"/><rect x="960.40" y="134.200" width="6.930" height="527.600" fill="#f6b994"/><rect x="967.28" y="134.200" width="6.930" height="527.600" fill="#7a4244"/><rect x="974.16" y="134.200" width="6.930" height="527.600" fill="#2a0f0e"/><rect x="981.04" y="134.200" width="6.930" height="527.600" fill="#7a4244"/><rect x="987.92" y="134.200" width="6.930" height="527.600" fill="#f6b994"/><rect x="994.80" y="134.200" width="6.930" height="527.600" fill="#9c5f44"/><rect x="1001.68" y="134.200" width="6.930" height="527.600" fill="#f6b994"/><rect x="1008.56" y="134.200" width="6.930" height="527.600" fill="#7a4244"/><rect x="1015.44" y="134.200" width="6.930" height="527.600" fill="#2a0f0e"/><rect x="1022.32" y="134.200" width="6.930" height="527.600" fill="#7a4244"/><rect x="1029.20" y="134.200" width="6.930" height="527.600" fill="#2a0f0e"/><rect x="1036.08" y="134.200" width="6.930" height="527.600" fill="#fde6cd"/><rect x="1042.96" y="134.200" width="6.930" height="527.600" fill="#7a4244"/><rect x="1049.84" y="134.200" width="6.930" height="527.600" fill="#9c5f44"/><rect x="1056.72" y="134.200" width="6.930" height="527.600" fill="#f6b994"/><rect x="1063.60" y="134.200" width="6.930" height="527.600" fill="#fde6cd"/><rect x="1070.48" y="134.200" width="6.930" height="527.600" fill="#2a0f0e"/><rect x="1077.36" y="134.200" width="6.930" height="527.600" fill="#f6b994"/><rect x="1084.24" y="134.200" width="6.930" height="527.600" fill="#fde6cd"/><rect x="1091.12" y="134.200" width="6.930" height="527.600" fill="#2a0f0e"/><rect x="1098.00" y="134.200" width="6.930" height="527.600" fill="#f6b994"/><rect x="1104.88" y="134.200" width="6.930" height="527.600" fill="#7a4244"/><rect x="1111.76" y="134.200" width="6.930" height="527.600" fill="#f6b994"/><rect x="1118.64" y="134.200" width="6.930" height="527.600" fill="#2a0f0e"/><path d="M503.70 91.70H573.30A8.5 8.5 0 0 1 581.80 100.20V169.20A8.5 8.5 0 0 1 573.30 177.70H503.70A8.5 8.5 0 0 1 495.20 169.20V100.20A8.5 8.5 0 0 1 503.70 91.70ZM513.60 114.00H555.40A5 5 0 0 1 560.40 119.00V160.80A5 5 0 0 1 555.40 165.80H513.60A5 5 0 0 1 508.60 160.80V119.00A5 5 0 0 1 513.60 114.00Z" fill="#f6b994" fill-rule="evenodd"/><path d="M461.10 177.98H530.70A8.5 8.5 0 0 1 539.20 186.48V255.48A8.5 8.5 0 0 1 530.70 263.98H461.10A8.5 8.5 0 0 1 452.60 255.48V186.48A8.5 8.5 0 0 1 461.10 177.98ZM479.60 189.58H521.00A5 5 0 0 1 526.00 194.58V235.98A5 5 0 0 1 521.00 240.98H479.60A5 5 0 0 1 474.60 235.98V194.58A5 5 0 0 1 479.60 189.58Z" fill="#9c5f44" fill-rule="evenodd"/><path d="M503.70 264.26H573.30A8.5 8.5 0 0 1 581.80 272.76V341.76A8.5 8.5 0 0 1 573.30 350.26H503.70A8.5 8.5 0 0 1 495.20 341.76V272.76A8.5 8.5 0 0 1 503.70 264.26ZM513.60 286.56H555.40A5 5 0 0 1 560.40 291.56V333.36A5 5 0 0 1 555.40 338.36H513.60A5 5 0 0 1 508.60 333.36V291.56A5 5 0 0 1 513.60 286.56Z" fill="#2a0f0e" fill-rule="evenodd"/><path d="M461.10 350.54H530.70A8.5 8.5 0 0 1 539.20 359.04V428.04A8.5 8.5 0 0 1 530.70 436.54H461.10A8.5 8.5 0 0 1 452.60 428.04V359.04A8.5 8.5 0 0 1 461.10 350.54ZM479.60 362.14H521.00A5 5 0 0 1 526.00 367.14V408.54A5 5 0 0 1 521.00 413.54H479.60A5 5 0 0 1 474.60 408.54V367.14A5 5 0 0 1 479.60 362.14Z" fill="#7a4244" fill-rule="evenodd"/><path d="M503.70 436.82H573.30A8.5 8.5 0 0 1 581.80 445.32V514.32A8.5 8.5 0 0 1 573.30 522.82H503.70A8.5 8.5 0 0 1 495.20 514.32V445.32A8.5 8.5 0 0 1 503.70 436.82ZM513.60 459.12H555.40A5 5 0 0 1 560.40 464.12V505.92A5 5 0 0 1 555.40 510.92H513.60A5 5 0 0 1 508.60 505.92V464.12A5 5 0 0 1 513.60 459.12Z" fill="#f6b994" fill-rule="evenodd"/><path d="M461.10 523.10H530.70A8.5 8.5 0 0 1 539.20 531.60V600.60A8.5 8.5 0 0 1 530.70 609.10H461.10A8.5 8.5 0 0 1 452.60 600.60V531.60A8.5 8.5 0 0 1 461.10 523.10ZM479.60 534.70H521.00A5 5 0 0 1 526.00 539.70V581.10A5 5 0 0 1 521.00 586.10H479.60A5 5 0 0 1 474.60 581.10V539.70A5 5 0 0 1 479.60 534.70Z" fill="#9c5f44" fill-rule="evenodd"/><path d="M503.70 609.38H573.30A8.5 8.5 0 0 1 581.80 617.88V686.88A8.5 8.5 0 0 1 573.30 695.38H503.70A8.5 8.5 0 0 1 495.20 686.88V617.88A8.5 8.5 0 0 1 503.70 609.38ZM513.60 631.68H555.40A5 5 0 0 1 560.40 636.68V678.48A5 5 0 0 1 555.40 683.48H513.60A5 5 0 0 1 508.60 678.48V636.68A5 5 0 0 1 513.60 631.68Z" fill="#2a0f0e" fill-rule="evenodd"/><path d="M664.70 91.70H733.50A8.5 8.5 0 0 1 742.00 100.20V169.20A8.5 8.5 0 0 1 733.50 177.70H664.70A8.5 8.5 0 0 1 656.20 169.20V100.20A8.5 8.5 0 0 1 664.70 91.70ZM674.10 114.00H715.30A5 5 0 0 1 720.30 119.00V160.20A5 5 0 0 1 715.30 165.20H674.10A5 5 0 0 1 669.10 160.20V119.00A5 5 0 0 1 674.10 114.00Z" fill="#f7bd9a" fill-rule="evenodd"/><path d="M621.60 177.98H690.60A8.5 8.5 0 0 1 699.10 186.48V255.48A8.5 8.5 0 0 1 690.60 263.98H621.60A8.5 8.5 0 0 1 613.10 255.48V186.48A8.5 8.5 0 0 1 621.60 177.98ZM639.90 189.58H681.00A5 5 0 0 1 686.00 194.58V235.68A5 5 0 0 1 681.00 240.68H639.90A5 5 0 0 1 634.90 235.68V194.58A5 5 0 0 1 639.90 189.58Z" fill="#9c5f44" fill-rule="evenodd"/><path d="M664.70 264.26H733.50A8.5 8.5 0 0 1 742.00 272.76V341.76A8.5 8.5 0 0 1 733.50 350.26H664.70A8.5 8.5 0 0 1 656.20 341.76V272.76A8.5 8.5 0 0 1 664.70 264.26ZM674.10 286.56H715.30A5 5 0 0 1 720.30 291.56V332.76A5 5 0 0 1 715.30 337.76H674.10A5 5 0 0 1 669.10 332.76V291.56A5 5 0 0 1 674.10 286.56Z" fill="#2a0f0e" fill-rule="evenodd"/><path d="M621.60 350.54H690.60A8.5 8.5 0 0 1 699.10 359.04V428.04A8.5 8.5 0 0 1 690.60 436.54H621.60A8.5 8.5 0 0 1 613.10 428.04V359.04A8.5 8.5 0 0 1 621.60 350.54ZM639.90 362.14H681.00A5 5 0 0 1 686.00 367.14V408.24A5 5 0 0 1 681.00 413.24H639.90A5 5 0 0 1 634.90 408.24V367.14A5 5 0 0 1 639.90 362.14Z" fill="#7a4244" fill-rule="evenodd"/><path d="M664.70 436.82H733.50A8.5 8.5 0 0 1 742.00 445.32V514.32A8.5 8.5 0 0 1 733.50 522.82H664.70A8.5 8.5 0 0 1 656.20 514.32V445.32A8.5 8.5 0 0 1 664.70 436.82ZM674.10 459.12H715.30A5 5 0 0 1 720.30 464.12V505.32A5 5 0 0 1 715.30 510.32H674.10A5 5 0 0 1 669.10 505.32V464.12A5 5 0 0 1 674.10 459.12Z" fill="#f7bd9a" fill-rule="evenodd"/><path d="M621.60 523.10H690.60A8.5 8.5 0 0 1 699.10 531.60V600.60A8.5 8.5 0 0 1 690.60 609.10H621.60A8.5 8.5 0 0 1 613.10 600.60V531.60A8.5 8.5 0 0 1 621.60 523.10ZM639.90 534.70H681.00A5 5 0 0 1 686.00 539.70V580.80A5 5 0 0 1 681.00 585.80H639.90A5 5 0 0 1 634.90 580.80V539.70A5 5 0 0 1 639.90 534.70Z" fill="#9c5f44" fill-rule="evenodd"/><path d="M664.70 609.38H733.50A8.5 8.5 0 0 1 742.00 617.88V686.88A8.5 8.5 0 0 1 733.50 695.38H664.70A8.5 8.5 0 0 1 656.20 686.88V617.88A8.5 8.5 0 0 1 664.70 609.38ZM674.10 631.68H715.30A5 5 0 0 1 720.30 636.68V677.88A5 5 0 0 1 715.30 682.88H674.10A5 5 0 0 1 669.10 677.88V636.68A5 5 0 0 1 674.10 631.68Z" fill="#2a0f0e" fill-rule="evenodd"/><rect x="75.400" y="134.800" width="1045.800" height="527.300" fill="none" stroke="#e01f10" stroke-width="1.350" opacity=".88"/><rect x="79.500" y="139.500" width="1037" height="518" fill="none" stroke="#0a0a0a" stroke-width="1"/><rect x="1118.500" y="135.500" width="1" height="526" fill="#2a0f0e"/><path d="M69.94 134.500V662" stroke="#1b8449" stroke-width="2.600" opacity=".18"/><path d="M69.94 134.500V662" stroke="#178043" stroke-width="1.150" opacity=".92"/><rect x="68.24" y="133.700" width="3.400" height="3.400" fill="#1b8449"/><rect x="68.24" y="660.300" width="3.400" height="3.400" fill="#1b8449"/><path d="M76.83 134.500V662" stroke="#1b8449" stroke-width="2.600" opacity=".18"/><path d="M76.83 134.500V662" stroke="#178043" stroke-width="1.150" opacity=".92"/><rect x="75.13" y="133.700" width="3.400" height="3.400" fill="#1b8449"/><rect x="75.13" y="660.300" width="3.400" height="3.400" fill="#1b8449"/><path d="M83.71 134.500V662" stroke="#1b8449" stroke-width="2.600" opacity=".18"/><path d="M83.71 134.500V662" stroke="#178043" stroke-width="1.150" opacity=".92"/><rect x="82.01" y="133.700" width="3.400" height="3.400" fill="#1b8449"/><rect x="82.01" y="660.300" width="3.400" height="3.400" fill="#1b8449"/><path d="M90.60 134.500V662" stroke="#1b8449" stroke-width="2.600" opacity=".18"/><path d="M90.60 134.500V662" stroke="#178043" stroke-width="1.150" opacity=".92"/><rect x="88.90" y="133.700" width="3.400" height="3.400" fill="#1b8449"/><rect x="88.90" y="660.300" width="3.400" height="3.400" fill="#1b8449"/><path d="M97.48 134.500V662" stroke="#1b8449" stroke-width="2.600" opacity=".18"/><path d="M97.48 134.500V662" stroke="#178043" stroke-width="1.150" opacity=".92"/><rect x="95.78" y="133.700" width="3.400" height="3.400" fill="#1b8449"/><rect x="95.78" y="660.300" width="3.400" height="3.400" fill="#1b8449"/><path d="M104.37 134.500V662" stroke="#1b8449" stroke-width="2.600" opacity=".18"/><path d="M104.37 134.500V662" stroke="#178043" stroke-width="1.150" opacity=".92"/><rect x="102.67" y="133.700" width="3.400" height="3.400" fill="#1b8449"/><rect x="102.67" y="660.300" width="3.400" height="3.400" fill="#1b8449"/><path d="M111.25 134.500V662" stroke="#1b8449" stroke-width="2.600" opacity=".18"/><path d="M111.25 134.500V662" stroke="#178043" stroke-width="1.150" opacity=".92"/><rect x="109.55" y="133.700" width="3.400" height="3.400" fill="#1b8449"/><rect x="109.55" y="660.300" width="3.400" height="3.400" fill="#1b8449"/><path d="M118.14 134.500V662" stroke="#1b8449" stroke-width="2.600" opacity=".18"/><path d="M118.14 134.500V662" stroke="#178043" stroke-width="1.150" opacity=".92"/><rect x="116.44" y="133.700" width="3.400" height="3.400" fill="#1b8449"/><rect x="116.44" y="660.300" width="3.400" height="3.400" fill="#1b8449"/><path d="M125.02 134.500V662" stroke="#1b8449" stroke-width="2.600" opacity=".18"/><path d="M125.02 134.500V662" stroke="#178043" stroke-width="1.150" opacity=".92"/><rect x="123.32" y="133.700" width="3.400" height="3.400" fill="#1b8449"/><rect x="123.32" y="660.300" width="3.400" height="3.400" fill="#1b8449"/><path d="M131.91 134.500V662" stroke="#1b8449" stroke-width="2.600" opacity=".18"/><path d="M131.91 134.500V662" stroke="#178043" stroke-width="1.150" opacity=".92"/><rect x="130.21" y="133.700" width="3.400" height="3.400" fill="#1b8449"/><rect x="130.21" y="660.300" width="3.400" height="3.400" fill="#1b8449"/><path d="M138.79 134.500V662" stroke="#1b8449" stroke-width="2.600" opacity=".18"/><path d="M138.79 134.500V662" stroke="#178043" stroke-width="1.150" opacity=".92"/><rect x="137.09" y="133.700" width="3.400" height="3.400" fill="#1b8449"/><rect x="137.09" y="660.300" width="3.400" height="3.400" fill="#1b8449"/><path d="M145.68 134.500V662" stroke="#1b8449" stroke-width="2.600" opacity=".18"/><path d="M145.68 134.500V662" stroke="#178043" stroke-width="1.150" opacity=".92"/><rect x="143.98" y="133.700" width="3.400" height="3.400" fill="#1b8449"/><rect x="143.98" y="660.300" width="3.400" height="3.400" fill="#1b8449"/><path d="M152.56 134.500V662" stroke="#1b8449" stroke-width="2.600" opacity=".18"/><path d="M152.56 134.500V662" stroke="#178043" stroke-width="1.150" opacity=".92"/><rect x="150.86" y="133.700" width="3.400" height="3.400" fill="#1b8449"/><rect x="150.86" y="660.300" width="3.400" height="3.400" fill="#1b8449"/><path d="M159.45 134.500V662" stroke="#1b8449" stroke-width="2.600" opacity=".18"/><path d="M159.45 134.500V662" stroke="#178043" stroke-width="1.150" opacity=".92"/><rect x="157.75" y="133.700" width="3.400" height="3.400" fill="#1b8449"/><rect x="157.75" y="660.300" width="3.400" height="3.400" fill="#1b8449"/><path d="M166.33 134.500V662" stroke="#1b8449" stroke-width="2.600" opacity=".18"/><path d="M166.33 134.500V662" stroke="#178043" stroke-width="1.150" opacity=".92"/><rect x="164.63" y="133.700" width="3.400" height="3.400" fill="#1b8449"/><rect x="164.63" y="660.300" width="3.400" height="3.400" fill="#1b8449"/><path d="M173.22 134.500V662" stroke="#1b8449" stroke-width="2.600" opacity=".18"/><path d="M173.22 134.500V662" stroke="#178043" stroke-width="1.150" opacity=".92"/><rect x="171.52" y="133.700" width="3.400" height="3.400" fill="#1b8449"/><rect x="171.52" y="660.300" width="3.400" height="3.400" fill="#1b8449"/><path d="M180.10 134.500V662" stroke="#1b8449" stroke-width="2.600" opacity=".18"/><path d="M180.10 134.500V662" stroke="#178043" stroke-width="1.150" opacity=".92"/><rect x="178.40" y="133.700" width="3.400" height="3.400" fill="#1b8449"/><rect x="178.40" y="660.300" width="3.400" height="3.400" fill="#1b8449"/><path d="M186.99 134.500V662" stroke="#1b8449" stroke-width="2.600" opacity=".18"/><path d="M186.99 134.500V662" stroke="#178043" stroke-width="1.150" opacity=".92"/><rect x="185.29" y="133.700" width="3.400" height="3.400" fill="#1b8449"/><rect x="185.29" y="660.300" width="3.400" height="3.400" fill="#1b8449"/><path d="M193.87 134.500V662" stroke="#1b8449" stroke-width="2.600" opacity=".18"/><path d="M193.87 134.500V662" stroke="#178043" stroke-width="1.150" opacity=".92"/><rect x="192.17" y="133.700" width="3.400" height="3.400" fill="#1b8449"/><rect x="192.17" y="660.300" width="3.400" height="3.400" fill="#1b8449"/><path d="M200.76 134.500V662" stroke="#1b8449" stroke-width="2.600" opacity=".18"/><path d="M200.76 134.500V662" stroke="#178043" stroke-width="1.150" opacity=".92"/><rect x="199.06" y="133.700" width="3.400" height="3.400" fill="#1b8449"/><rect x="199.06" y="660.300" width="3.400" height="3.400" fill="#1b8449"/><path d="M207.64 134.500V662" stroke="#1b8449" stroke-width="2.600" opacity=".18"/><path d="M207.64 134.500V662" stroke="#178043" stroke-width="1.150" opacity=".92"/><rect x="205.94" y="133.700" width="3.400" height="3.400" fill="#1b8449"/><rect x="205.94" y="660.300" width="3.400" height="3.400" fill="#1b8449"/><path d="M214.53 134.500V662" stroke="#1b8449" stroke-width="2.600" opacity=".18"/><path d="M214.53 134.500V662" stroke="#178043" stroke-width="1.150" opacity=".92"/><rect x="212.83" y="133.700" width="3.400" height="3.400" fill="#1b8449"/><rect x="212.83" y="660.300" width="3.400" height="3.400" fill="#1b8449"/><path d="M221.41 134.500V662" stroke="#1b8449" stroke-width="2.600" opacity=".18"/><path d="M221.41 134.500V662" stroke="#178043" stroke-width="1.150" opacity=".92"/><rect x="219.71" y="133.700" width="3.400" height="3.400" fill="#1b8449"/><rect x="219.71" y="660.300" width="3.400" height="3.400" fill="#1b8449"/><path d="M228.30 134.500V662" stroke="#1b8449" stroke-width="2.600" opacity=".18"/><path d="M228.30 134.500V662" stroke="#178043" stroke-width="1.150" opacity=".92"/><rect x="226.60" y="133.700" width="3.400" height="3.400" fill="#1b8449"/><rect x="226.60" y="660.300" width="3.400" height="3.400" fill="#1b8449"/><path d="M235.18 134.500V662" stroke="#1b8449" stroke-width="2.600" opacity=".18"/><path d="M235.18 134.500V662" stroke="#178043" stroke-width="1.150" opacity=".92"/><rect x="233.48" y="133.700" width="3.400" height="3.400" fill="#1b8449"/><rect x="233.48" y="660.300" width="3.400" height="3.400" fill="#1b8449"/><path d="M242.07 134.500V662" stroke="#1b8449" stroke-width="2.600" opacity=".18"/><path d="M242.07 134.500V662" stroke="#178043" stroke-width="1.150" opacity=".92"/><rect x="240.37" y="133.700" width="3.400" height="3.400" fill="#1b8449"/><rect x="240.37" y="660.300" width="3.400" height="3.400" fill="#1b8449"/><path d="M248.95 134.500V662" stroke="#1b8449" stroke-width="2.600" opacity=".18"/><path d="M248.95 134.500V662" stroke="#178043" stroke-width="1.150" opacity=".92"/><rect x="247.25" y="133.700" width="3.400" height="3.400" fill="#1b8449"/><rect x="247.25" y="660.300" width="3.400" height="3.400" fill="#1b8449"/><path d="M255.84 134.500V662" stroke="#1b8449" stroke-width="2.600" opacity=".18"/><path d="M255.84 134.500V662" stroke="#178043" stroke-width="1.150" opacity=".92"/><rect x="254.14" y="133.700" width="3.400" height="3.400" fill="#1b8449"/><rect x="254.14" y="660.300" width="3.400" height="3.400" fill="#1b8449"/><path d="M262.72 134.500V662" stroke="#1b8449" stroke-width="2.600" opacity=".18"/><path d="M262.72 134.500V662" stroke="#178043" stroke-width="1.150" opacity=".92"/><rect x="261.02" y="133.700" width="3.400" height="3.400" fill="#1b8449"/><rect x="261.02" y="660.300" width="3.400" height="3.400" fill="#1b8449"/><path d="M269.61 134.500V662" stroke="#1b8449" stroke-width="2.600" opacity=".18"/><path d="M269.61 134.500V662" stroke="#178043" stroke-width="1.150" opacity=".92"/><rect x="267.91" y="133.700" width="3.400" height="3.400" fill="#1b8449"/><rect x="267.91" y="660.300" width="3.400" height="3.400" fill="#1b8449"/><path d="M276.49 134.500V662" stroke="#1b8449" stroke-width="2.600" opacity=".18"/><path d="M276.49 134.500V662" stroke="#178043" stroke-width="1.150" opacity=".92"/><rect x="274.79" y="133.700" width="3.400" height="3.400" fill="#1b8449"/><rect x="274.79" y="660.300" width="3.400" height="3.400" fill="#1b8449"/><path d="M283.38 134.500V662" stroke="#1b8449" stroke-width="2.600" opacity=".18"/><path d="M283.38 134.500V662" stroke="#178043" stroke-width="1.150" opacity=".92"/><rect x="281.68" y="133.700" width="3.400" height="3.400" fill="#1b8449"/><rect x="281.68" y="660.300" width="3.400" height="3.400" fill="#1b8449"/><path d="M290.26 134.500V662" stroke="#1b8449" stroke-width="2.600" opacity=".18"/><path d="M290.26 134.500V662" stroke="#178043" stroke-width="1.150" opacity=".92"/><rect x="288.56" y="133.700" width="3.400" height="3.400" fill="#1b8449"/><rect x="288.56" y="660.300" width="3.400" height="3.400" fill="#1b8449"/><path d="M297.15 134.500V662" stroke="#1b8449" stroke-width="2.600" opacity=".18"/><path d="M297.15 134.500V662" stroke="#178043" stroke-width="1.150" opacity=".92"/><rect x="295.45" y="133.700" width="3.400" height="3.400" fill="#1b8449"/><rect x="295.45" y="660.300" width="3.400" height="3.400" fill="#1b8449"/><path d="M304.03 134.500V662" stroke="#1b8449" stroke-width="2.600" opacity=".18"/><path d="M304.03 134.500V662" stroke="#178043" stroke-width="1.150" opacity=".92"/><rect x="302.33" y="133.700" width="3.400" height="3.400" fill="#1b8449"/><rect x="302.33" y="660.300" width="3.400" height="3.400" fill="#1b8449"/><path d="M310.92 134.500V662" stroke="#1b8449" stroke-width="2.600" opacity=".18"/><path d="M310.92 134.500V662" stroke="#178043" stroke-width="1.150" opacity=".92"/><rect x="309.22" y="133.700" width="3.400" height="3.400" fill="#1b8449"/><rect x="309.22" y="660.300" width="3.400" height="3.400" fill="#1b8449"/><path d="M317.80 134.500V662" stroke="#1b8449" stroke-width="2.600" opacity=".18"/><path d="M317.80 134.500V662" stroke="#178043" stroke-width="1.150" opacity=".92"/><rect x="316.10" y="133.700" width="3.400" height="3.400" fill="#1b8449"/><rect x="316.10" y="660.300" width="3.400" height="3.400" fill="#1b8449"/><path d="M324.69 134.500V662" stroke="#1b8449" stroke-width="2.600" opacity=".18"/><path d="M324.69 134.500V662" stroke="#178043" stroke-width="1.150" opacity=".92"/><rect x="322.99" y="133.700" width="3.400" height="3.400" fill="#1b8449"/><rect x="322.99" y="660.300" width="3.400" height="3.400" fill="#1b8449"/><path d="M331.57 134.500V662" stroke="#1b8449" stroke-width="2.600" opacity=".18"/><path d="M331.57 134.500V662" stroke="#178043" stroke-width="1.150" opacity=".92"/><rect x="329.87" y="133.700" width="3.400" height="3.400" fill="#1b8449"/><rect x="329.87" y="660.300" width="3.400" height="3.400" fill="#1b8449"/><path d="M338.46 134.500V662" stroke="#1b8449" stroke-width="2.600" opacity=".18"/><path d="M338.46 134.500V662" stroke="#178043" stroke-width="1.150" opacity=".92"/><rect x="336.76" y="133.700" width="3.400" height="3.400" fill="#1b8449"/><rect x="336.76" y="660.300" width="3.400" height="3.400" fill="#1b8449"/><path d="M345.34 134.500V662" stroke="#1b8449" stroke-width="2.600" opacity=".18"/><path d="M345.34 134.500V662" stroke="#178043" stroke-width="1.150" opacity=".92"/><rect x="343.64" y="133.700" width="3.400" height="3.400" fill="#1b8449"/><rect x="343.64" y="660.300" width="3.400" height="3.400" fill="#1b8449"/><path d="M352.23 134.500V662" stroke="#1b8449" stroke-width="2.600" opacity=".18"/><path d="M352.23 134.500V662" stroke="#178043" stroke-width="1.150" opacity=".92"/><rect x="350.53" y="133.700" width="3.400" height="3.400" fill="#1b8449"/><rect x="350.53" y="660.300" width="3.400" height="3.400" fill="#1b8449"/><path d="M359.11 134.500V662" stroke="#1b8449" stroke-width="2.600" opacity=".18"/><path d="M359.11 134.500V662" stroke="#178043" stroke-width="1.150" opacity=".92"/><rect x="357.41" y="133.700" width="3.400" height="3.400" fill="#1b8449"/><rect x="357.41" y="660.300" width="3.400" height="3.400" fill="#1b8449"/><path d="M366.00 134.500V662" stroke="#1b8449" stroke-width="2.600" opacity=".18"/><path d="M366.00 134.500V662" stroke="#178043" stroke-width="1.150" opacity=".92"/><rect x="364.30" y="133.700" width="3.400" height="3.400" fill="#1b8449"/><rect x="364.30" y="660.300" width="3.400" height="3.400" fill="#1b8449"/><path d="M372.88 134.500V662" stroke="#1b8449" stroke-width="2.600" opacity=".18"/><path d="M372.88 134.500V662" stroke="#178043" stroke-width="1.150" opacity=".92"/><rect x="371.18" y="133.700" width="3.400" height="3.400" fill="#1b8449"/><rect x="371.18" y="660.300" width="3.400" height="3.400" fill="#1b8449"/><path d="M379.77 134.500V662" stroke="#1b8449" stroke-width="2.600" opacity=".18"/><path d="M379.77 134.500V662" stroke="#178043" stroke-width="1.150" opacity=".92"/><rect x="378.07" y="133.700" width="3.400" height="3.400" fill="#1b8449"/><rect x="378.07" y="660.300" width="3.400" height="3.400" fill="#1b8449"/><path d="M386.65 134.500V662" stroke="#1b8449" stroke-width="2.600" opacity=".18"/><path d="M386.65 134.500V662" stroke="#178043" stroke-width="1.150" opacity=".92"/><rect x="384.95" y="133.700" width="3.400" height="3.400" fill="#1b8449"/><rect x="384.95" y="660.300" width="3.400" height="3.400" fill="#1b8449"/><path d="M393.54 134.500V662" stroke="#1b8449" stroke-width="2.600" opacity=".18"/><path d="M393.54 134.500V662" stroke="#178043" stroke-width="1.150" opacity=".92"/><rect x="391.84" y="133.700" width="3.400" height="3.400" fill="#1b8449"/><rect x="391.84" y="660.300" width="3.400" height="3.400" fill="#1b8449"/><path d="M400.42 134.500V662" stroke="#1b8449" stroke-width="2.600" opacity=".18"/><path d="M400.42 134.500V662" stroke="#178043" stroke-width="1.150" opacity=".92"/><rect x="398.72" y="133.700" width="3.400" height="3.400" fill="#1b8449"/><rect x="398.72" y="660.300" width="3.400" height="3.400" fill="#1b8449"/><path d="M407.31 134.500V662" stroke="#1b8449" stroke-width="2.600" opacity=".18"/><path d="M407.31 134.500V662" stroke="#178043" stroke-width="1.150" opacity=".92"/><rect x="405.61" y="133.700" width="3.400" height="3.400" fill="#1b8449"/><rect x="405.61" y="660.300" width="3.400" height="3.400" fill="#1b8449"/><path d="M414.19 134.500V662" stroke="#1b8449" stroke-width="2.600" opacity=".18"/><path d="M414.19 134.500V662" stroke="#178043" stroke-width="1.150" opacity=".92"/><rect x="412.49" y="133.700" width="3.400" height="3.400" fill="#1b8449"/><rect x="412.49" y="660.300" width="3.400" height="3.400" fill="#1b8449"/><path d="M421.08 134.500V662" stroke="#1b8449" stroke-width="2.600" opacity=".18"/><path d="M421.08 134.500V662" stroke="#178043" stroke-width="1.150" opacity=".92"/><rect x="419.38" y="133.700" width="3.400" height="3.400" fill="#1b8449"/><rect x="419.38" y="660.300" width="3.400" height="3.400" fill="#1b8449"/><path d="M427.96 134.500V662" stroke="#1b8449" stroke-width="2.600" opacity=".18"/><path d="M427.96 134.500V662" stroke="#178043" stroke-width="1.150" opacity=".92"/><rect x="426.26" y="133.700" width="3.400" height="3.400" fill="#1b8449"/><rect x="426.26" y="660.300" width="3.400" height="3.400" fill="#1b8449"/><path d="M434.85 134.500V662" stroke="#1b8449" stroke-width="2.600" opacity=".18"/><path d="M434.85 134.500V662" stroke="#178043" stroke-width="1.150" opacity=".92"/><rect x="433.15" y="133.700" width="3.400" height="3.400" fill="#1b8449"/><rect x="433.15" y="660.300" width="3.400" height="3.400" fill="#1b8449"/><path d="M70.500 135V662H598.500V135" fill="none" stroke="#1b8449" stroke-width="1"/><path d="M70.500 135H598.500" fill="none" stroke="#7a3a1c" stroke-width="1.100"/><path d="M70.500 662H598.500" fill="none" stroke="#1b8449" stroke-width="1.700"/><rect x="70.500" y="92.500" width="528" height="603" fill="none" stroke="#1b8449" stroke-width="1"/><path d="M597.500 135.500V662" stroke="#1b8449" stroke-width="1"/><path d="M503.70 91.70H573.30A8.5 8.5 0 0 1 581.80 100.20V169.20A8.5 8.5 0 0 1 573.30 177.70H503.70A8.5 8.5 0 0 1 495.20 169.20V100.20A8.5 8.5 0 0 1 503.70 91.70ZM513.60 114.00H555.40A5 5 0 0 1 560.40 119.00V160.80A5 5 0 0 1 555.40 165.80H513.60A5 5 0 0 1 508.60 160.80V119.00A5 5 0 0 1 513.60 114.00Z" fill="none" stroke="#1b8449" stroke-width="1"/><rect x="503.9" y="89.9" width="3.600" height="3.600" fill="#1b8449"/><rect x="569.5" y="89.9" width="3.600" height="3.600" fill="#1b8449"/><rect x="580.0" y="100.4" width="3.600" height="3.600" fill="#1b8449"/><rect x="580.0" y="165.4" width="3.600" height="3.600" fill="#1b8449"/><rect x="569.5" y="175.9" width="3.600" height="3.600" fill="#1b8449"/><rect x="503.9" y="175.9" width="3.600" height="3.600" fill="#1b8449"/><rect x="493.4" y="165.4" width="3.600" height="3.600" fill="#1b8449"/><rect x="493.4" y="100.4" width="3.600" height="3.600" fill="#1b8449"/><rect x="512.8" y="112.2" width="3.600" height="3.600" fill="#1b8449"/><rect x="552.6" y="112.2" width="3.600" height="3.600" fill="#1b8449"/><rect x="558.6" y="118.2" width="3.600" height="3.600" fill="#1b8449"/><rect x="558.6" y="158.0" width="3.600" height="3.600" fill="#1b8449"/><rect x="552.6" y="164.0" width="3.600" height="3.600" fill="#1b8449"/><rect x="512.8" y="164.0" width="3.600" height="3.600" fill="#1b8449"/><rect x="506.8" y="158.0" width="3.600" height="3.600" fill="#1b8449"/><rect x="506.8" y="118.2" width="3.600" height="3.600" fill="#1b8449"/><path d="M461.10 177.98H530.70A8.5 8.5 0 0 1 539.20 186.48V255.48A8.5 8.5 0 0 1 530.70 263.98H461.10A8.5 8.5 0 0 1 452.60 255.48V186.48A8.5 8.5 0 0 1 461.10 177.98ZM479.60 189.58H521.00A5 5 0 0 1 526.00 194.58V235.98A5 5 0 0 1 521.00 240.98H479.60A5 5 0 0 1 474.60 235.98V194.58A5 5 0 0 1 479.60 189.58Z" fill="none" stroke="#1b8449" stroke-width="1"/><rect x="461.3" y="176.2" width="3.600" height="3.600" fill="#1b8449"/><rect x="526.9" y="176.2" width="3.600" height="3.600" fill="#1b8449"/><rect x="537.4" y="186.7" width="3.600" height="3.600" fill="#1b8449"/><rect x="537.4" y="251.7" width="3.600" height="3.600" fill="#1b8449"/><rect x="526.9" y="262.2" width="3.600" height="3.600" fill="#1b8449"/><rect x="461.3" y="262.2" width="3.600" height="3.600" fill="#1b8449"/><rect x="450.8" y="251.7" width="3.600" height="3.600" fill="#1b8449"/><rect x="450.8" y="186.7" width="3.600" height="3.600" fill="#1b8449"/><rect x="478.8" y="187.8" width="3.600" height="3.600" fill="#1b8449"/><rect x="518.2" y="187.8" width="3.600" height="3.600" fill="#1b8449"/><rect x="524.2" y="193.8" width="3.600" height="3.600" fill="#1b8449"/><rect x="524.2" y="233.2" width="3.600" height="3.600" fill="#1b8449"/><rect x="518.2" y="239.2" width="3.600" height="3.600" fill="#1b8449"/><rect x="478.8" y="239.2" width="3.600" height="3.600" fill="#1b8449"/><rect x="472.8" y="233.2" width="3.600" height="3.600" fill="#1b8449"/><rect x="472.8" y="193.8" width="3.600" height="3.600" fill="#1b8449"/><path d="M503.70 264.26H573.30A8.5 8.5 0 0 1 581.80 272.76V341.76A8.5 8.5 0 0 1 573.30 350.26H503.70A8.5 8.5 0 0 1 495.20 341.76V272.76A8.5 8.5 0 0 1 503.70 264.26ZM513.60 286.56H555.40A5 5 0 0 1 560.40 291.56V333.36A5 5 0 0 1 555.40 338.36H513.60A5 5 0 0 1 508.60 333.36V291.56A5 5 0 0 1 513.60 286.56Z" fill="none" stroke="#1b8449" stroke-width="1"/><rect x="503.9" y="262.5" width="3.600" height="3.600" fill="#1b8449"/><rect x="569.5" y="262.5" width="3.600" height="3.600" fill="#1b8449"/><rect x="580.0" y="273.0" width="3.600" height="3.600" fill="#1b8449"/><rect x="580.0" y="338.0" width="3.600" height="3.600" fill="#1b8449"/><rect x="569.5" y="348.5" width="3.600" height="3.600" fill="#1b8449"/><rect x="503.9" y="348.5" width="3.600" height="3.600" fill="#1b8449"/><rect x="493.4" y="338.0" width="3.600" height="3.600" fill="#1b8449"/><rect x="493.4" y="273.0" width="3.600" height="3.600" fill="#1b8449"/><rect x="512.8" y="284.8" width="3.600" height="3.600" fill="#1b8449"/><rect x="552.6" y="284.8" width="3.600" height="3.600" fill="#1b8449"/><rect x="558.6" y="290.8" width="3.600" height="3.600" fill="#1b8449"/><rect x="558.6" y="330.6" width="3.600" height="3.600" fill="#1b8449"/><rect x="552.6" y="336.6" width="3.600" height="3.600" fill="#1b8449"/><rect x="512.8" y="336.6" width="3.600" height="3.600" fill="#1b8449"/><rect x="506.8" y="330.6" width="3.600" height="3.600" fill="#1b8449"/><rect x="506.8" y="290.8" width="3.600" height="3.600" fill="#1b8449"/><path d="M461.10 350.54H530.70A8.5 8.5 0 0 1 539.20 359.04V428.04A8.5 8.5 0 0 1 530.70 436.54H461.10A8.5 8.5 0 0 1 452.60 428.04V359.04A8.5 8.5 0 0 1 461.10 350.54ZM479.60 362.14H521.00A5 5 0 0 1 526.00 367.14V408.54A5 5 0 0 1 521.00 413.54H479.60A5 5 0 0 1 474.60 408.54V367.14A5 5 0 0 1 479.60 362.14Z" fill="none" stroke="#1b8449" stroke-width="1"/><rect x="461.3" y="348.7" width="3.600" height="3.600" fill="#1b8449"/><rect x="526.9" y="348.7" width="3.600" height="3.600" fill="#1b8449"/><rect x="537.4" y="359.2" width="3.600" height="3.600" fill="#1b8449"/><rect x="537.4" y="424.2" width="3.600" height="3.600" fill="#1b8449"/><rect x="526.9" y="434.7" width="3.600" height="3.600" fill="#1b8449"/><rect x="461.3" y="434.7" width="3.600" height="3.600" fill="#1b8449"/><rect x="450.8" y="424.2" width="3.600" height="3.600" fill="#1b8449"/><rect x="450.8" y="359.2" width="3.600" height="3.600" fill="#1b8449"/><rect x="478.8" y="360.3" width="3.600" height="3.600" fill="#1b8449"/><rect x="518.2" y="360.3" width="3.600" height="3.600" fill="#1b8449"/><rect x="524.2" y="366.3" width="3.600" height="3.600" fill="#1b8449"/><rect x="524.2" y="405.7" width="3.600" height="3.600" fill="#1b8449"/><rect x="518.2" y="411.7" width="3.600" height="3.600" fill="#1b8449"/><rect x="478.8" y="411.7" width="3.600" height="3.600" fill="#1b8449"/><rect x="472.8" y="405.7" width="3.600" height="3.600" fill="#1b8449"/><rect x="472.8" y="366.3" width="3.600" height="3.600" fill="#1b8449"/><path d="M503.70 436.82H573.30A8.5 8.5 0 0 1 581.80 445.32V514.32A8.5 8.5 0 0 1 573.30 522.82H503.70A8.5 8.5 0 0 1 495.20 514.32V445.32A8.5 8.5 0 0 1 503.70 436.82ZM513.60 459.12H555.40A5 5 0 0 1 560.40 464.12V505.92A5 5 0 0 1 555.40 510.92H513.60A5 5 0 0 1 508.60 505.92V464.12A5 5 0 0 1 513.60 459.12Z" fill="none" stroke="#1b8449" stroke-width="1"/><rect x="503.9" y="435.0" width="3.600" height="3.600" fill="#1b8449"/><rect x="569.5" y="435.0" width="3.600" height="3.600" fill="#1b8449"/><rect x="580.0" y="445.5" width="3.600" height="3.600" fill="#1b8449"/><rect x="580.0" y="510.5" width="3.600" height="3.600" fill="#1b8449"/><rect x="569.5" y="521.0" width="3.600" height="3.600" fill="#1b8449"/><rect x="503.9" y="521.0" width="3.600" height="3.600" fill="#1b8449"/><rect x="493.4" y="510.5" width="3.600" height="3.600" fill="#1b8449"/><rect x="493.4" y="445.5" width="3.600" height="3.600" fill="#1b8449"/><rect x="512.8" y="457.3" width="3.600" height="3.600" fill="#1b8449"/><rect x="552.6" y="457.3" width="3.600" height="3.600" fill="#1b8449"/><rect x="558.6" y="463.3" width="3.600" height="3.600" fill="#1b8449"/><rect x="558.6" y="503.1" width="3.600" height="3.600" fill="#1b8449"/><rect x="552.6" y="509.1" width="3.600" height="3.600" fill="#1b8449"/><rect x="512.8" y="509.1" width="3.600" height="3.600" fill="#1b8449"/><rect x="506.8" y="503.1" width="3.600" height="3.600" fill="#1b8449"/><rect x="506.8" y="463.3" width="3.600" height="3.600" fill="#1b8449"/><path d="M461.10 523.10H530.70A8.5 8.5 0 0 1 539.20 531.60V600.60A8.5 8.5 0 0 1 530.70 609.10H461.10A8.5 8.5 0 0 1 452.60 600.60V531.60A8.5 8.5 0 0 1 461.10 523.10ZM479.60 534.70H521.00A5 5 0 0 1 526.00 539.70V581.10A5 5 0 0 1 521.00 586.10H479.60A5 5 0 0 1 474.60 581.10V539.70A5 5 0 0 1 479.60 534.70Z" fill="none" stroke="#1b8449" stroke-width="1"/><rect x="461.3" y="521.3" width="3.600" height="3.600" fill="#1b8449"/><rect x="526.9" y="521.3" width="3.600" height="3.600" fill="#1b8449"/><rect x="537.4" y="531.8" width="3.600" height="3.600" fill="#1b8449"/><rect x="537.4" y="596.8" width="3.600" height="3.600" fill="#1b8449"/><rect x="526.9" y="607.3" width="3.600" height="3.600" fill="#1b8449"/><rect x="461.3" y="607.3" width="3.600" height="3.600" fill="#1b8449"/><rect x="450.8" y="596.8" width="3.600" height="3.600" fill="#1b8449"/><rect x="450.8" y="531.8" width="3.600" height="3.600" fill="#1b8449"/><rect x="478.8" y="532.9" width="3.600" height="3.600" fill="#1b8449"/><rect x="518.2" y="532.9" width="3.600" height="3.600" fill="#1b8449"/><rect x="524.2" y="538.9" width="3.600" height="3.600" fill="#1b8449"/><rect x="524.2" y="578.3" width="3.600" height="3.600" fill="#1b8449"/><rect x="518.2" y="584.3" width="3.600" height="3.600" fill="#1b8449"/><rect x="478.8" y="584.3" width="3.600" height="3.600" fill="#1b8449"/><rect x="472.8" y="578.3" width="3.600" height="3.600" fill="#1b8449"/><rect x="472.8" y="538.9" width="3.600" height="3.600" fill="#1b8449"/><path d="M503.70 609.38H573.30A8.5 8.5 0 0 1 581.80 617.88V686.88A8.5 8.5 0 0 1 573.30 695.38H503.70A8.5 8.5 0 0 1 495.20 686.88V617.88A8.5 8.5 0 0 1 503.70 609.38ZM513.60 631.68H555.40A5 5 0 0 1 560.40 636.68V678.48A5 5 0 0 1 555.40 683.48H513.60A5 5 0 0 1 508.60 678.48V636.68A5 5 0 0 1 513.60 631.68Z" fill="none" stroke="#1b8449" stroke-width="1"/><rect x="503.9" y="607.6" width="3.600" height="3.600" fill="#1b8449"/><rect x="569.5" y="607.6" width="3.600" height="3.600" fill="#1b8449"/><rect x="580.0" y="618.1" width="3.600" height="3.600" fill="#1b8449"/><rect x="580.0" y="683.1" width="3.600" height="3.600" fill="#1b8449"/><rect x="569.5" y="693.6" width="3.600" height="3.600" fill="#1b8449"/><rect x="503.9" y="693.6" width="3.600" height="3.600" fill="#1b8449"/><rect x="493.4" y="683.1" width="3.600" height="3.600" fill="#1b8449"/><rect x="493.4" y="618.1" width="3.600" height="3.600" fill="#1b8449"/><rect x="512.8" y="629.9" width="3.600" height="3.600" fill="#1b8449"/><rect x="552.6" y="629.9" width="3.600" height="3.600" fill="#1b8449"/><rect x="558.6" y="635.9" width="3.600" height="3.600" fill="#1b8449"/><rect x="558.6" y="675.7" width="3.600" height="3.600" fill="#1b8449"/><rect x="552.6" y="681.7" width="3.600" height="3.600" fill="#1b8449"/><rect x="512.8" y="681.7" width="3.600" height="3.600" fill="#1b8449"/><rect x="506.8" y="675.7" width="3.600" height="3.600" fill="#1b8449"/><rect x="506.8" y="635.9" width="3.600" height="3.600" fill="#1b8449"/><rect x="515.500" y="396.500" width="3.400" height="3.400" fill="#1b8449"/><rect x="596.500" y="133.800" width="3.400" height="3.400" fill="#1b8449"/><rect x="596.500" y="660.300" width="3.400" height="3.400" fill="#1b8449"/><rect x="68.0" y="90.0" width="5" height="5" fill="#fff" stroke="#1b8449" stroke-width="1"/><rect x="331.5" y="90.0" width="5" height="5" fill="#fff" stroke="#1b8449" stroke-width="1"/><rect x="596.0" y="90.0" width="5" height="5" fill="#fff" stroke="#1b8449" stroke-width="1"/><rect x="68.0" y="392.0" width="5" height="5" fill="#fff" stroke="#1b8449" stroke-width="1"/><rect x="596.0" y="392.0" width="5" height="5" fill="#fff" stroke="#1b8449" stroke-width="1"/><rect x="68.0" y="693.0" width="5" height="5" fill="#fff" stroke="#1b8449" stroke-width="1"/><rect x="331.5" y="693.0" width="5" height="5" fill="#fff" stroke="#1b8449" stroke-width="1"/><rect x="596.0" y="693.0" width="5" height="5" fill="#fff" stroke="#1b8449" stroke-width="1"/></svg>
<div class="a" style="left:1131px;top:89px;width:15.5px;height:618px;background:linear-gradient(90deg,#e6e6e6,#f5f5f5 30%,#efefef)"></div>
<svg class="a" style="left:1135px;top:95.500px" width="7" height="5"><path d="M0 4.500H7L3.500 .5Z" fill="#666"/></svg>
<svg class="a" style="left:1135px;top:696.500px" width="7" height="5"><path d="M0 .5H7L3.500 4.500Z" fill="#666"/></svg>
<div class="a" style="left:1131.5px;top:390px;width:14px;height:14px;background:linear-gradient(90deg,#fff,#d0d0d0);border:1px solid #8a8a8a;border-radius:2px"></div>
<div class="a" style="left:65px;top:707px;width:1081.5px;height:16px;background:linear-gradient(#e6e6e6,#f4f4f4 50%,#e8e8e8)"></div>
<div class="a" style="left:1130px;top:707px;width:16.5px;height:16px;background:#fbfbfb"></div>
<div class="a" style="left:0px;top:723px;width:1366px;height:1px;background:#4a4a4a"></div>
<div class="a" style="left:0px;top:724px;width:1366px;height:2.5px;background:#e2e2e2"></div>
<div class="a" style="left:0px;top:726.5px;width:1366px;height:1.5px;background:#a0a0a0"></div>
<div class="a" style="left:65.5px;top:707.5px;width:58px;height:15px;background:#fff"></div>
<div class="t " style="left:71px;top:711.3px;font-size:10px;letter-spacing:-0.17px;">87%</div>
<svg class="a" style="left:112px;top:714.500px" width="9" height="5"><path d="M0 0H8L4 4.500Z" fill="#000"/></svg>
<div class="a" style="left:123.5px;top:707.5px;width:33px;height:15px;background:#dcdcdc"></div>
<svg class="a" style="left:128px;top:711px" width="28" height="8" viewBox="0 0 28 8"><path d="M1 0V8" stroke="#888" stroke-width="1.400"/><path d="M7 0V8L2 4Z" fill="#888"/><path d="M24 0V8L19 4Z" fill="#999"/></svg>
<div class="a" style="left:157px;top:707.5px;width:45px;height:15px;background:#fff"></div>
<div class="t " style="left:163px;top:711.3px;font-size:10px;">1</div>
<svg class="a" style="left:188.500px;top:714.500px" width="9" height="5"><path d="M0 0H8L4 4.500Z" fill="#000"/></svg>
<div class="a" style="left:202px;top:707.5px;width:33px;height:15px;background:#dcdcdc"></div>
<svg class="a" style="left:205px;top:711px" width="28" height="8" viewBox="0 0 28 8"><path d="M3 0V8L8 4Z" fill="#888"/><path d="M17 0V8L22 4Z" fill="#888"/><path d="M23.500 0V8" stroke="#888" stroke-width="1.400"/></svg>
<div class="a" style="left:235.5px;top:708px;width:176px;height:14.5px;background:linear-gradient(#dedede,#d0d0d0);border:1px solid #c2c2c2"></div>
<div class="t " style="left:307.5px;top:711px;font-size:10px;letter-spacing:-0.04px;">Auswahl</div>
<svg class="a" style="left:402px;top:710.500px" width="7" height="10"><path d="M0 0V10L6.500 5Z" fill="#000"/></svg>
<svg class="a" style="left:419.500px;top:711.500px" width="6" height="8"><path d="M5 0V8L0 4Z" fill="#444"/></svg>
<svg class="a" style="left:1119.500px;top:711.500px" width="6" height="8"><path d="M0 0V8L5 4Z" fill="#444"/></svg>
<div class="a" style="left:764.5px;top:708px;width:15px;height:14.5px;background:linear-gradient(#fdfdfd,#cfcfcf);border:1px solid #8a8a8a;border-radius:2px"></div>
<div class="a" style="left:1146px;top:81px;width:1px;height:643px;background:#3c3c3c"></div>
<div class="a" style="left:1361px;top:37px;width:1px;height:687px;background:#4a4a4a"></div>
<div class="a" style="left:1362px;top:1px;width:3px;height:726px;background:#e0e0e0"></div>
<div class="a" style="left:1365px;top:0px;width:1px;height:728px;background:#9a9a9a"></div>
<div class="a" style="left:1147px;top:68px;width:214px;height:13px;background:linear-gradient(#565656,#2f2f2f)"></div>
<svg class="a" style="left:1348px;top:71px" width="9" height="7"><path d="M0 0V6L4 3Z M4.500 0V6L8.500 3Z" fill="#e4e4e4"/></svg>
<div class="a" style="left:1147px;top:81px;width:214px;height:643px;background:#d6d6d6"></div>
<div class="a" style="left:1147px;top:81px;width:214px;height:17px;background:linear-gradient(#8f8f8f,#828282);border-top:1px solid #999;border-bottom:1px solid #4a4a4a"></div>
<div class="a" style="left:1147px;top:81px;width:39px;height:16px;background:linear-gradient(#9a9a9a,#7c7c7c);border-top:1px solid #adadad;border-right:1px solid #565656;border-left:1px solid #a6a6a6"></div>
<div class="t " style="left:1154.2px;top:85px;font-size:10px;font-weight:bold;letter-spacing:-0.29px;color:#2a2a2a;text-shadow:0 1px 0 #a8a8a8">Farbe</div>
<div class="a" style="left:1186.5px;top:81px;width:62.0px;height:17.5px;background:linear-gradient(#eeeeee,#d6d6d6);border-top:1px solid #fafafa;border-right:1px solid #666"></div>
<div class="t " style="left:1194.4px;top:85px;font-size:10px;font-weight:bold;letter-spacing:-0.23px;color:#333;text-shadow:0 1px 0 #fff">Farbfelder</div>
<div class="a" style="left:1249px;top:81px;width:55.5px;height:16px;background:linear-gradient(#9a9a9a,#7c7c7c);border-top:1px solid #adadad;border-right:1px solid #565656;border-left:1px solid #a6a6a6"></div>
<div class="t " style="left:1255.4px;top:85px;font-size:10px;font-weight:bold;letter-spacing:-0.11px;color:#2a2a2a;text-shadow:0 1px 0 #a8a8a8">Farbhilfe</div>
<svg class="a" style="left:1343.5px;top:86px" width="14" height="8" viewBox="0 0 14 8"><path d="M0 1.5H4L2 4Z" fill="#2a2a2a"/><path d="M5.5 .5H13.5M5.5 2.5H13.5M5.5 4.5H13.5M5.5 6.5H13.5" stroke="#2a2a2a" stroke-width="1"/></svg>
<div class="a" style="left:1149px;top:98.5px;width:211.5px;height:1px;background:#111"></div>
<div class="a" style="left:1344px;top:99.5px;width:16.5px;height:85px;background:linear-gradient(90deg,#e2e2e2,#f2f2f2 40%,#e6e6e6)"></div>
<svg class="a" style="left:1348px;top:106.5px" width="8" height="5"><path d="M0 4.500H8L4 0Z" fill="#8c8c8c"/></svg>
<svg class="a" style="left:1348px;top:173.5px" width="8" height="5"><path d="M0 0H8L4 4.500Z" fill="#8c8c8c"/></svg>
<svg class="a" style="left:1148.500px;top:99.500px" width="195" height="85" viewBox="0 0 195 85"><rect x="0" y="0" width="196.5" height="14" fill="#222"/><rect x="0.5" y="0.5" width="13" height="13" fill="#fff"/><path d="M0.8 13.2L13.2 0.8" stroke="#c0103a" stroke-width="1.900"/><rect x="14.5" y="0.5" width="13" height="13" fill="#fff"/><circle cx="21" cy="7.0" r="4.300" fill="none" stroke="#111" stroke-width="1.200"/><circle cx="21" cy="7.0" r="1.200" fill="none" stroke="#111" stroke-width=".8"/><path d="M21 0.5V13.5M14.5 7.0H27.5" stroke="#111" stroke-width="1"/><rect x="28.5" y="0.5" width="13" height="13" fill="#ffffff"/><rect x="42.5" y="0.5" width="13" height="13" fill="#000000"/><rect x="56.5" y="0.5" width="13" height="13" fill="#e30613"/><rect x="70.5" y="0.5" width="13" height="13" fill="#ffed00"/><rect x="84.5" y="0.5" width="13" height="13" fill="#009640"/><rect x="98.5" y="0.5" width="13" height="13" fill="#009fe3"/><rect x="112.5" y="0.5" width="13" height="13" fill="#312783"/><rect x="126.5" y="0.5" width="13" height="13" fill="#e6007e"/><rect x="140.5" y="0.5" width="13" height="13" fill="#c8161e"/><rect x="154.5" y="0.5" width="13" height="13" fill="#e6332a"/><rect x="168.5" y="0.5" width="13" height="13" fill="#e9531d"/><rect x="182.5" y="0.5" width="13" height="13" fill="#f39200"/><rect x="0" y="14" width="196.5" height="14" fill="#222"/><rect x="0.5" y="14.5" width="13" height="13" fill="#f9b233"/><rect x="14.5" y="14.5" width="13" height="13" fill="#fcea10"/><rect x="28.5" y="14.5" width="13" height="13" fill="#dedc00"/><rect x="42.5" y="14.5" width="13" height="13" fill="#95c11f"/><rect x="56.5" y="14.5" width="13" height="13" fill="#3aaa35"/><rect x="70.5" y="14.5" width="13" height="13" fill="#00963f"/><rect x="84.5" y="14.5" width="13" height="13" fill="#006633"/><rect x="98.5" y="14.5" width="13" height="13" fill="#2fac66"/><rect x="112.5" y="14.5" width="13" height="13" fill="#00a19a"/><rect x="126.5" y="14.5" width="13" height="13" fill="#36a9e1"/><rect x="140.5" y="14.5" width="13" height="13" fill="#1d71b8"/><rect x="154.5" y="14.5" width="13" height="13" fill="#2d2e83"/><rect x="168.5" y="14.5" width="13" height="13" fill="#29235c"/><rect x="182.5" y="14.5" width="13" height="13" fill="#662483"/><rect x="0" y="28" width="196.5" height="14" fill="#222"/><rect x="0.5" y="28.5" width="13" height="13" fill="#951b81"/><rect x="14.5" y="28.5" width="13" height="13" fill="#a3195b"/><rect x="28.5" y="28.5" width="13" height="13" fill="#d60b52"/><rect x="42.5" y="28.5" width="13" height="13" fill="#e71d73"/><rect x="56.5" y="28.5" width="13" height="13" fill="#cbbba0"/><rect x="70.5" y="28.5" width="13" height="13" fill="#a48a7b"/><rect x="84.5" y="28.5" width="13" height="13" fill="#7b6a58"/><rect x="98.5" y="28.5" width="13" height="13" fill="#634e42"/><rect x="112.5" y="28.5" width="13" height="13" fill="#ca9e67"/><rect x="126.5" y="28.5" width="13" height="13" fill="#b17f4a"/><rect x="140.5" y="28.5" width="13" height="13" fill="#936037"/><rect x="154.5" y="28.5" width="13" height="13" fill="#7d4e24"/><rect x="168.5" y="28.5" width="13" height="13" fill="#683c11"/><rect x="182.5" y="28.5" width="13" height="13" fill="#432918"/><rect x="0" y="42" width="196.5" height="14" fill="#222"/><rect x="0.5" y="42.5" width="13" height="13" fill="#000000"/><rect x="14.5" y="42.5" width="13" height="13" fill="#3c3c3b"/><rect x="28.5" y="42.5" width="13" height="13" fill="#575756"/><rect x="42.5" y="42.5" width="13" height="13" fill="#706f6f"/><rect x="56.5" y="42.5" width="13" height="13" fill="#878787"/><rect x="70.5" y="42.5" width="13" height="13" fill="#9d9d9c"/><rect x="84.5" y="42.5" width="13" height="13" fill="#b2b2b2"/><rect x="98.5" y="42.5" width="13" height="13" fill="#c6c6c6"/><rect x="112.5" y="42.5" width="13" height="13" fill="#dadada"/><rect x="126.5" y="42.5" width="13" height="13" fill="#ededed"/><rect x="140.5" y="42.5" width="13" height="13" fill="#f8f8f8"/><rect x="154.5" y="42.5" width="13" height="13" fill="#e30613"/><rect x="168.5" y="42.5" width="13" height="13" fill="#ea5b0c"/><rect x="182.5" y="42.5" width="13" height="13" fill="#ffde00"/><rect x="0" y="56" width="42.5" height="14" fill="#222"/><rect x="0.5" y="56.5" width="13" height="13" fill="#009640"/><rect x="14.5" y="56.5" width="13" height="13" fill="#273a90"/><rect x="28.5" y="56.5" width="13" height="13" fill="#7d2c8a"/><rect x="0" y="69.500" width="83" height="14.500" fill="#2b2b2b"/><rect x="0" y="70" width="13" height="13.500" fill="#d6d6d6"/><path d="M2 74.500V81.500H11.500V75.500H7L6 74H3Z" fill="url(#gb)" stroke="#777" stroke-width=".8"/><rect x="13.6" y="70" width="13.500" height="13.500" fill="#fde6cd"/><rect x="27.5" y="70" width="13.500" height="13.500" fill="#f6b994"/><rect x="41.4" y="70" width="13.500" height="13.500" fill="#9c5f44"/><rect x="55.3" y="70" width="13.500" height="13.500" fill="#2a0f0e"/><rect x="69.2" y="70" width="13.500" height="13.500" fill="#7a4244"/></svg>
<div class="a" style="left:1149px;top:184.5px;width:195px;height:1px;background:#111"></div>
<svg class="a" style="left:1155.0px;top:184.5px" width="18" height="16" viewBox="0 0 18 16"><rect x="1.500" y="2.500" width="8" height="7" fill="#e6e6e6" stroke="#444"/><rect x="3.500" y="4.500" width="8" height="7" fill="#e6e6e6" stroke="#444"/><rect x="5.500" y="6.500" width="8" height="7" fill="#f4f4f4" stroke="#333"/><path d="M5.500 9H13.500M8 6.500V13.500M10.800 6.500V13.500" stroke="#555" stroke-width=".8"/><path d="M17 11.500V15H13.500Z" fill="#222"/></svg>
<svg class="a" style="left:1196.5px;top:184.5px" width="17" height="16" viewBox="0 0 17 16"><rect x="2.500" y="2.500" width="10" height="10" fill="url(#gb)" stroke="#333" stroke-width="1.200"/><path d="M16 11V14.500H12.500Z" fill="#222"/></svg>
<svg class="a" style="left:1227.0px;top:184.5px" width="16" height="16" viewBox="0 0 16 16"><rect x="2.500" y="4.500" width="11" height="8" fill="#eee" stroke="#999"/><path d="M4 7.500H6M7 7.500H12M4 9.500H6M7 9.500H12" stroke="#999"/></svg>
<svg class="a" style="left:1257.0px;top:184.0px" width="18" height="16" viewBox="0 0 18 16"><path d="M1.500 4V13.500H12.500V5.500H7L6 3.500H2Z" fill="#f0f0f0" stroke="#555"/><path d="M14 1V7M11 4H17" stroke="#111" stroke-width="1.800"/></svg>
<svg class="a" style="left:1290.0px;top:185.0px" width="16" height="16" viewBox="0 0 16 16"><rect x="3.500" y="3.500" width="9" height="9" fill="#f6f6f6" stroke="#9a9a9a"/><rect x="5.500" y="8" width="4.500" height="4.500" fill="#e0e0e0" stroke="#9a9a9a" stroke-width=".9"/></svg>
<svg class="a" style="left:1320.5px;top:184.5px" width="16" height="16" viewBox="0 0 16 16"><path d="M4.500 5.500H11.500L11 14H5Z" fill="#f4f4f4" stroke="#8a8a8a"/><path d="M3.500 4.500H12.500" stroke="#8a8a8a" stroke-width="1.600"/><path d="M6.500 3H9.500" stroke="#8a8a8a" stroke-width="1.400"/><path d="M6.500 7V12.500M8 7V12.500M9.500 7V12.500" stroke="#8a8a8a" stroke-width=".8"/></svg>
<div class="a" style="left:1349px;top:189px;width:10px;height:10px;clip-path:polygon(100% 0,100% 100%,0 100%)"><div style="width:10px;height:10px;background-image:linear-gradient(90deg,#adadad 1px,transparent 1px);background-size:2px 2px;mask-image:linear-gradient(#000 1px,transparent 1px);mask-size:2px 2px;-webkit-mask-image:linear-gradient(#000 1px,transparent 1px);-webkit-mask-size:2px 2px"></div></div>
<div class="a" style="left:1147px;top:201px;width:214px;height:4px;background:#363636"></div>
<div class="a" style="left:1147px;top:205px;width:214px;height:17px;background:linear-gradient(#8f8f8f,#828282);border-top:1px solid #999;border-bottom:1px solid #4a4a4a"></div>
<div class="a" style="left:1147px;top:205px;width:41px;height:17.5px;background:linear-gradient(#eeeeee,#d6d6d6);border-top:1px solid #fafafa;border-right:1px solid #666"></div>
<div class="t " style="left:1154.2px;top:209px;font-size:10px;font-weight:bold;letter-spacing:-0.51px;color:#333;text-shadow:0 1px 0 #fff">Pinsel</div>
<div class="a" style="left:1188.5px;top:205px;width:55.0px;height:16px;background:linear-gradient(#9a9a9a,#7c7c7c);border-top:1px solid #adadad;border-right:1px solid #565656;border-left:1px solid #a6a6a6"></div>
<div class="t " style="left:1195.4px;top:209px;font-size:10px;font-weight:bold;letter-spacing:-0.27px;color:#2a2a2a;text-shadow:0 1px 0 #a8a8a8">Symbole</div>
<div class="a" style="left:1244px;top:205px;width:63.5px;height:16px;background:linear-gradient(#9a9a9a,#7c7c7c);border-top:1px solid #adadad;border-right:1px solid #565656;border-left:1px solid #a6a6a6"></div>
<div class="t " style="left:1251.3px;top:209px;font-size:10px;font-weight:bold;letter-spacing:-0.06px;color:#2a2a2a;text-shadow:0 1px 0 #a8a8a8">Grafikstile</div>
<svg class="a" style="left:1343.5px;top:210px" width="14" height="8" viewBox="0 0 14 8"><path d="M0 1.5H4L2 4Z" fill="#2a2a2a"/><path d="M5.5 .5H13.5M5.5 2.5H13.5M5.5 4.5H13.5M5.5 6.5H13.5" stroke="#2a2a2a" stroke-width="1"/></svg>
<div class="a" style="left:1149px;top:222.5px;width:211.5px;height:1px;background:#111"></div>
<div class="a" style="left:1149px;top:223.5px;width:195px;height:96px;background:#fff"></div>
<div class="a" style="left:1344px;top:223.5px;width:16.5px;height:96px;background:linear-gradient(90deg,#e2e2e2,#f2f2f2 40%,#e6e6e6)"></div>
<svg class="a" style="left:1348px;top:230.5px" width="8" height="5"><path d="M0 4.500H8L4 0Z" fill="#8c8c8c"/></svg>
<svg class="a" style="left:1348px;top:308.5px" width="8" height="5"><path d="M0 0H8L4 4.500Z" fill="#8c8c8c"/></svg>
<div class="a" style="left:1345px;top:242px;width:14px;height:15px;background:linear-gradient(90deg,#fff,#d4d4d4);border:1px solid #999;border-radius:2px"></div>
<div class="a" style="left:1180.45px;top:223.5px;width:1px;height:32px;background:#111"></div>
<div class="a" style="left:1212.4px;top:223.5px;width:1px;height:32px;background:#111"></div>
<div class="a" style="left:1244.35px;top:223.5px;width:1px;height:32px;background:#111"></div>
<div class="a" style="left:1276.3px;top:223.5px;width:1px;height:32px;background:#111"></div>
<div class="a" style="left:1308.25px;top:223.5px;width:1px;height:32px;background:#111"></div>
<div class="a" style="left:1340.2px;top:223.5px;width:1px;height:32px;background:#111"></div>
<div class="a" style="left:1149px;top:255.2px;width:192px;height:1px;background:#111"></div>
<div class="a" style="left:1149px;top:287.3px;width:195px;height:1px;background:#111"></div>
<svg class="a" style="left:1149px;top:223.500px" width="195" height="96" viewBox="0 0 195 96"><rect x="15" y="15.500" width="1.500" height="1" fill="#111"/><ellipse cx="48" cy="16" rx="2.600" ry="1.500" fill="#111" transform="rotate(15 48 16)"/><rect x="79.500" y="13.500" width=".6" height="5" fill="#888"/><circle cx="112" cy="16" r="1.300" fill="#111"/><path d="M112 14V18M110 16H114" stroke="#111" stroke-width=".6"/><circle cx="144" cy="16" r="3.600" fill="#111"/><circle cx="176" cy="16" r="7.600" fill="#111"/><rect x="6.300" y="46.300" width="147.500" height="3" fill="#000"/><path d="M8 79.300C40 78 90 77.500 130 78.300C150 78.300 170 78.600 187 79.500C170 80.300 150 80.800 120 81C80 81.600 40 81.600 8 79.300Z" fill="#1a1a1a"/></svg>
<div class="t " style="left:1309.4px;top:267px;font-size:10px;letter-spacing:-0.19px;">Einfach</div>
<div class="a" style="left:1149px;top:319px;width:195px;height:1px;background:#111"></div>
<svg class="a" style="left:1155.0px;top:319.5px" width="18" height="16" viewBox="0 0 18 16"><rect x="1.500" y="2.500" width="8" height="7" fill="#e6e6e6" stroke="#444"/><rect x="3.500" y="4.500" width="8" height="7" fill="#e6e6e6" stroke="#444"/><rect x="5.500" y="6.500" width="8" height="7" fill="#f4f4f4" stroke="#333"/><path d="M5.500 9H13.500M8 6.500V13.500M10.800 6.500V13.500" stroke="#555" stroke-width=".8"/><path d="M17 11.500V15H13.500Z" fill="#222"/></svg>
<svg class="a" style="left:1223.0px;top:319.5px" width="16" height="16" viewBox="0 0 16 16"><path d="M3 3L13 13M13 3L3 13" stroke="#9a9a9a" stroke-width="1.600"/></svg>
<svg class="a" style="left:1252.0px;top:319.5px" width="20" height="16" viewBox="0 0 20 16"><path d="M2 13L9 3" stroke="#999" stroke-width="2"/><path d="M10 6H19M10 9H19M12 12H19" stroke="#999" stroke-width="1.200"/></svg>
<svg class="a" style="left:1290.5px;top:320.0px" width="16" height="16" viewBox="0 0 16 16"><rect x="3.500" y="3.500" width="9" height="9" fill="#f6f6f6" stroke="#222"/><rect x="5.500" y="8" width="4.500" height="4.500" fill="#e0e0e0" stroke="#222" stroke-width=".9"/></svg>
<svg class="a" style="left:1321.0px;top:319.5px" width="16" height="16" viewBox="0 0 16 16"><path d="M4.500 5.500H11.500L11 14H5Z" fill="#f4f4f4" stroke="#333"/><path d="M3.500 4.500H12.500" stroke="#333" stroke-width="1.600"/><path d="M6.500 3H9.500" stroke="#333" stroke-width="1.400"/><path d="M6.500 7V12.500M8 7V12.500M9.500 7V12.500" stroke="#333" stroke-width=".8"/></svg>
<div class="a" style="left:1349px;top:325px;width:10px;height:10px;clip-path:polygon(100% 0,100% 100%,0 100%)"><div style="width:10px;height:10px;background-image:linear-gradient(90deg,#adadad 1px,transparent 1px);background-size:2px 2px;mask-image:linear-gradient(#000 1px,transparent 1px);mask-size:2px 2px;-webkit-mask-image:linear-gradient(#000 1px,transparent 1px);-webkit-mask-size:2px 2px"></div></div>
<div class="a" style="left:1147px;top:337px;width:214px;height:3.5px;background:#363636"></div>
<div class="a" style="left:1147px;top:340.5px;width:214px;height:17px;background:linear-gradient(#8f8f8f,#828282);border-top:1px solid #999;border-bottom:1px solid #4a4a4a"></div>
<div class="a" style="left:1147px;top:340.5px;width:47px;height:17.5px;background:linear-gradient(#eeeeee,#d6d6d6);border-top:1px solid #fafafa;border-right:1px solid #666"></div>
<div class="t " style="left:1154.2px;top:344.5px;font-size:10px;font-weight:bold;letter-spacing:-0.59px;color:#333;text-shadow:0 1px 0 #fff">Ebenen</div>
<div class="a" style="left:1194.5px;top:340.5px;width:50.0px;height:16px;background:linear-gradient(#9a9a9a,#7c7c7c);border-top:1px solid #adadad;border-right:1px solid #565656;border-left:1px solid #a6a6a6"></div>
<div class="t " style="left:1201.2px;top:344.5px;font-size:10px;font-weight:bold;letter-spacing:-0.31px;color:#2a2a2a;text-shadow:0 1px 0 #a8a8a8">Zeichen</div>
<div class="a" style="left:1245px;top:340.5px;width:45.5px;height:16px;background:linear-gradient(#9a9a9a,#7c7c7c);border-top:1px solid #adadad;border-right:1px solid #565656;border-left:1px solid #a6a6a6"></div>
<div class="t " style="left:1252.3px;top:344.5px;font-size:10px;font-weight:bold;letter-spacing:-0.35px;color:#2a2a2a;text-shadow:0 1px 0 #a8a8a8">Absatz</div>
<svg class="a" style="left:1343.5px;top:345.5px" width="14" height="8" viewBox="0 0 14 8"><path d="M0 1.5H4L2 4Z" fill="#2a2a2a"/><path d="M5.5 .5H13.5M5.5 2.5H13.5M5.5 4.5H13.5M5.5 6.5H13.5" stroke="#2a2a2a" stroke-width="1"/></svg>
<div class="a" style="left:1149px;top:357.8px;width:211.5px;height:1px;background:#111"></div>
<div class="a" style="left:1149px;top:358.8px;width:195px;height:184px;background:#d9d9d9"></div>
<div class="a" style="left:1344px;top:358.8px;width:16.5px;height:184px;background:linear-gradient(90deg,#e2e2e2,#f2f2f2 40%,#e6e6e6)"></div>
<svg class="a" style="left:1348px;top:365.8px" width="8" height="5"><path d="M0 4.500H8L4 0Z" fill="#8c8c8c"/></svg>
<svg class="a" style="left:1348px;top:531.8px" width="8" height="5"><path d="M0 0H8L4 4.500Z" fill="#8c8c8c"/></svg>
<div class="a" style="left:1150px;top:360px;width:16.5px;height:18px;background:#dcdcdc;border:1px solid #f2f2f2;border-right-color:#bdbdbd;border-bottom-color:#bdbdbd"></div>
<svg class="a" style="left:1151.5px;top:362.5px" width="14" height="12" viewBox="0 0 14 12"><path d="M.5 6.500C3 2.500 11 2.500 13.500 6.500C11 10 3 10 .5 6.500Z" fill="#f4f4f4" stroke="#111" stroke-width="1"/><circle cx="7" cy="6.300" r="2.700" fill="#222"/><circle cx="6.200" cy="5.500" r=".8" fill="#ddd"/><path d="M1 4.500C3.500 1.500 10.500 1.500 13 4.500" fill="none" stroke="#111" stroke-width="1.300"/></svg>
<div class="a" style="left:1168px;top:360px;width:14px;height:18px;background:#dcdcdc;border:1px solid #f2f2f2;border-right-color:#bdbdbd;border-bottom-color:#bdbdbd"></div>
<div class="a" style="left:1184.7px;top:361px;width:4.2px;height:16px;background:#0c8a4c"></div>
<div class="a" style="left:1194px;top:359px;width:149px;height:19.5px;background:#e3e3e3;border-bottom:1px solid #c4c4c4"></div>
<svg class="a" style="left:1196.500px;top:365.5px" width="10" height="7"><path d="M.5 .5H9.500L5 6.500Z" fill="#f0f0f0" stroke="#888"/></svg>
<svg class="a" style="left:1211.5px;top:361px" width="16" height="16" viewBox="0 0 16 16"><rect x=".5" y=".5" width="15" height="15" fill="#fff" stroke="#111"/><rect x="1" y="4" width="14" height="8" fill="#c99a80"/><path d="M2.500 4V12M5 4V12M11 4V12M13.500 4V12" stroke="#7a3a30" stroke-width="1.200"/><rect x="7" y="3" width="2.500" height="10" fill="#fde6cd"/></svg>
<div class="t " style="left:1231.5px;top:363.7px;font-size:10px;letter-spacing:-0.25px;color:#111">Meine Ebene</div>
<svg class="a" style="left:1319px;top:363.5px" width="11" height="11" viewBox="0 0 11 11"><circle cx="5.500" cy="5.500" r="4.100" fill="#f4f4f4" stroke="#222" stroke-width="1"/></svg>
<div class="a" style="left:1335px;top:366px;width:5px;height:5px;background:#0c8a4c"></div>
<svg class="a" style="left:1338px;top:359px" width="5" height="5"><path d="M0 0H5V5Z" fill="#111"/></svg>
<div class="a" style="left:1150px;top:380px;width:16.5px;height:18px;background:#dcdcdc;border:1px solid #f2f2f2;border-right-color:#bdbdbd;border-bottom-color:#bdbdbd"></div>
<svg class="a" style="left:1151.5px;top:382.5px" width="14" height="12" viewBox="0 0 14 12"><path d="M.5 6.500C3 2.500 11 2.500 13.500 6.500C11 10 3 10 .5 6.500Z" fill="#f4f4f4" stroke="#111" stroke-width="1"/><circle cx="7" cy="6.300" r="2.700" fill="#222"/><circle cx="6.200" cy="5.500" r=".8" fill="#ddd"/><path d="M1 4.500C3.500 1.500 10.500 1.500 13 4.500" fill="none" stroke="#111" stroke-width="1.300"/></svg>
<div class="a" style="left:1168px;top:380px;width:14px;height:18px;background:#dcdcdc;border:1px solid #f2f2f2;border-right-color:#bdbdbd;border-bottom-color:#bdbdbd"></div>
<div class="a" style="left:1184.7px;top:381px;width:4.2px;height:16px;background:#0c8a4c"></div>
<div class="a" style="left:1194px;top:379px;width:30.5px;height:19.5px;background:#fff"></div>
<div class="a" style="left:1224.5px;top:379px;width:118.5px;height:19.5px;background:#3f8fe9;border-bottom:1px solid #2f74c8"></div>
<svg class="a" style="left:1212.500px;top:384px" width="7" height="10"><path d="M.5 .5V9.500L6 5Z" fill="#f4f4f4" stroke="#777"/></svg>
<svg class="a" style="left:1226.3px;top:381px" width="16" height="16" viewBox="0 0 16 16"><rect x=".5" y=".5" width="15" height="15" fill="#fff" stroke="#111"/><rect x="2" y="1" width="11" height="14" fill="#c08a70"/><path d="M3.500 1V15M6 1V15M8.500 1V15M11 1V15" stroke="#7a4244" stroke-width="1"/><path d="M4.700 1V15M9.700 1V15" stroke="#f6c9a8" stroke-width="1"/></svg>
<div class="t " style="left:1246.1px;top:383.7px;font-size:10px;font-weight:bold;letter-spacing:0.16px;color:#fff">Linien 4</div>
<svg class="a" style="left:1318px;top:382px" width="13" height="13" viewBox="0 0 13 13"><circle cx="6.500" cy="6.500" r="5.700" fill="none" stroke="#16325e" stroke-width="1"/><circle cx="6.500" cy="6.500" r="3.500" fill="#3f8fe9" stroke="#16325e" stroke-width="1.100"/></svg>
<div class="a" style="left:1334.5px;top:384.5px;width:8px;height:8px;background:#0c8a4c;border:1px solid #0a3a1e"></div>
<div class="a" style="left:1150px;top:400px;width:16.5px;height:18px;background:#dcdcdc;border:1px solid #f2f2f2;border-right-color:#bdbdbd;border-bottom-color:#bdbdbd"></div>
<svg class="a" style="left:1151.5px;top:402.5px" width="14" height="12" viewBox="0 0 14 12"><path d="M.5 6.500C3 2.500 11 2.500 13.500 6.500C11 10 3 10 .5 6.500Z" fill="#f4f4f4" stroke="#111" stroke-width="1"/><circle cx="7" cy="6.300" r="2.700" fill="#222"/><circle cx="6.200" cy="5.500" r=".8" fill="#ddd"/><path d="M1 4.500C3.500 1.500 10.500 1.500 13 4.500" fill="none" stroke="#111" stroke-width="1.300"/></svg>
<div class="a" style="left:1168px;top:400px;width:14px;height:18px;background:#dcdcdc;border:1px solid #f2f2f2;border-right-color:#bdbdbd;border-bottom-color:#bdbdbd"></div>
<div class="a" style="left:1184.7px;top:401px;width:4.2px;height:16px;background:#0c8a4c"></div>
<div class="a" style="left:1194px;top:399px;width:30.5px;height:19.5px;background:#fff"></div>
<div class="a" style="left:1224.5px;top:399px;width:118.5px;height:19.5px;background:#3f8fe9;border-bottom:1px solid #2f74c8"></div>
<svg class="a" style="left:1212.500px;top:404px" width="7" height="10"><path d="M.5 .5V9.500L6 5Z" fill="#f4f4f4" stroke="#777"/></svg>
<svg class="a" style="left:1226.3px;top:401px" width="16" height="16" viewBox="0 0 16 16"><rect x=".5" y=".5" width="15" height="15" fill="#fff" stroke="#111"/><rect x="6.500" y="2.500" width="3" height="3" fill="#f6b994"/><rect x="5.500" y="5.500" width="3" height="3" fill="#7a2a20"/><rect x="6.500" y="8.500" width="3" height="3" fill="#2a0f0e"/><rect x="5.500" y="11.500" width="3" height="2.500" fill="#9c5f44"/></svg>
<div class="t " style="left:1246.1px;top:403.7px;font-size:10px;font-weight:bold;letter-spacing:0.11px;color:#fff">Schmuckran...</div>
<svg class="a" style="left:1318px;top:402px" width="13" height="13" viewBox="0 0 13 13"><circle cx="6.500" cy="6.500" r="5.700" fill="none" stroke="#16325e" stroke-width="1"/><circle cx="6.500" cy="6.500" r="3.500" fill="#3f8fe9" stroke="#16325e" stroke-width="1.100"/></svg>
<div class="a" style="left:1334.5px;top:404.5px;width:8px;height:8px;background:#0c8a4c;border:1px solid #0a3a1e"></div>
<div class="a" style="left:1150px;top:420px;width:16.5px;height:18px;background:#dcdcdc;border:1px solid #f2f2f2;border-right-color:#bdbdbd;border-bottom-color:#bdbdbd"></div>
<svg class="a" style="left:1151.5px;top:422.5px" width="14" height="12" viewBox="0 0 14 12"><path d="M.5 6.500C3 2.500 11 2.500 13.500 6.500C11 10 3 10 .5 6.500Z" fill="#f4f4f4" stroke="#111" stroke-width="1"/><circle cx="7" cy="6.300" r="2.700" fill="#222"/><circle cx="6.200" cy="5.500" r=".8" fill="#ddd"/><path d="M1 4.500C3.500 1.500 10.500 1.500 13 4.500" fill="none" stroke="#111" stroke-width="1.300"/></svg>
<div class="a" style="left:1168px;top:420px;width:14px;height:18px;background:#dcdcdc;border:1px solid #f2f2f2;border-right-color:#bdbdbd;border-bottom-color:#bdbdbd"></div>
<div class="a" style="left:1184.7px;top:421px;width:4.2px;height:16px;background:#0c8a4c"></div>
<div class="a" style="left:1194px;top:419px;width:149px;height:19.5px;background:#fff;border-bottom:1px solid #c4c4c4"></div>
<svg class="a" style="left:1212.500px;top:424px" width="7" height="10"><path d="M.5 .5V9.500L6 5Z" fill="#f4f4f4" stroke="#777"/></svg>
<svg class="a" style="left:1226.3px;top:421px" width="16" height="16" viewBox="0 0 16 16"><rect x=".5" y=".5" width="15" height="15" fill="#fff" stroke="#111"/><rect x="2" y="1" width="11" height="14" fill="#c08a70"/><path d="M3.500 1V15M6 1V15M8.500 1V15M11 1V15" stroke="#7a4244" stroke-width="1"/><path d="M4.700 1V15M9.700 1V15" stroke="#f6c9a8" stroke-width="1"/></svg>
<div class="t " style="left:1246.1px;top:423.7px;font-size:10px;letter-spacing:-0.25px;color:#111">Linien 1</div>
<svg class="a" style="left:1319px;top:423.5px" width="11" height="11" viewBox="0 0 11 11"><circle cx="5.500" cy="5.500" r="4.100" fill="#f4f4f4" stroke="#222" stroke-width="1"/></svg>
<div class="a" style="left:1150px;top:440px;width:16.5px;height:18px;background:#dcdcdc;border:1px solid #f2f2f2;border-right-color:#bdbdbd;border-bottom-color:#bdbdbd"></div>
<svg class="a" style="left:1151.5px;top:442.5px" width="14" height="12" viewBox="0 0 14 12"><path d="M.5 6.500C3 2.500 11 2.500 13.500 6.500C11 10 3 10 .5 6.500Z" fill="#f4f4f4" stroke="#111" stroke-width="1"/><circle cx="7" cy="6.300" r="2.700" fill="#222"/><circle cx="6.200" cy="5.500" r=".8" fill="#ddd"/><path d="M1 4.500C3.500 1.500 10.500 1.500 13 4.500" fill="none" stroke="#111" stroke-width="1.300"/></svg>
<div class="a" style="left:1168px;top:440px;width:14px;height:18px;background:#dcdcdc;border:1px solid #f2f2f2;border-right-color:#bdbdbd;border-bottom-color:#bdbdbd"></div>
<div class="a" style="left:1184.7px;top:441px;width:4.2px;height:16px;background:#0c8a4c"></div>
<div class="a" style="left:1194px;top:439px;width:149px;height:19.5px;background:#fff;border-bottom:1px solid #c4c4c4"></div>
<svg class="a" style="left:1212.500px;top:444px" width="7" height="10"><path d="M.5 .5V9.500L6 5Z" fill="#f4f4f4" stroke="#777"/></svg>
<svg class="a" style="left:1226.3px;top:441px" width="16" height="16" viewBox="0 0 16 16"><rect x=".5" y=".5" width="15" height="15" fill="#fff" stroke="#111"/><rect x="6.500" y="2.500" width="3" height="3" fill="#f6b994"/><rect x="5.500" y="5.500" width="3" height="3" fill="#7a2a20"/><rect x="6.500" y="8.500" width="3" height="3" fill="#2a0f0e"/><rect x="5.500" y="11.500" width="3" height="2.500" fill="#9c5f44"/></svg>
<div class="t " style="left:1246.1px;top:443.7px;font-size:10px;letter-spacing:0.08px;color:#111">Schmuckrand 1</div>
<svg class="a" style="left:1319px;top:443.5px" width="11" height="11" viewBox="0 0 11 11"><circle cx="5.500" cy="5.500" r="4.100" fill="#f4f4f4" stroke="#222" stroke-width="1"/></svg>
<div class="a" style="left:1150px;top:460px;width:16.5px;height:18px;background:#dcdcdc;border:1px solid #f2f2f2;border-right-color:#bdbdbd;border-bottom-color:#bdbdbd"></div>
<svg class="a" style="left:1151.5px;top:462.5px" width="14" height="12" viewBox="0 0 14 12"><path d="M.5 6.500C3 2.500 11 2.500 13.500 6.500C11 10 3 10 .5 6.500Z" fill="#f4f4f4" stroke="#111" stroke-width="1"/><circle cx="7" cy="6.300" r="2.700" fill="#222"/><circle cx="6.200" cy="5.500" r=".8" fill="#ddd"/><path d="M1 4.500C3.500 1.500 10.500 1.500 13 4.500" fill="none" stroke="#111" stroke-width="1.300"/></svg>
<div class="a" style="left:1168px;top:460px;width:14px;height:18px;background:#dcdcdc;border:1px solid #f2f2f2;border-right-color:#bdbdbd;border-bottom-color:#bdbdbd"></div>
<div class="a" style="left:1184.7px;top:461px;width:4.2px;height:16px;background:#0c8a4c"></div>
<div class="a" style="left:1194px;top:459px;width:149px;height:19.5px;background:#fff;border-bottom:1px solid #c4c4c4"></div>
<svg class="a" style="left:1226.3px;top:461px" width="16" height="16" viewBox="0 0 16 16"><rect x=".5" y=".5" width="15" height="15" fill="#fff" stroke="#111"/></svg>
<div class="t " style="left:1246.1px;top:463.7px;font-size:10px;letter-spacing:-0.60px;color:#111">&lt;Pfad&gt;</div>
<svg class="a" style="left:1319px;top:463.5px" width="11" height="11" viewBox="0 0 11 11"><circle cx="5.500" cy="5.500" r="4.100" fill="#f4f4f4" stroke="#222" stroke-width="1"/></svg>
<div class="a" style="left:1150px;top:480px;width:16.5px;height:18px;background:#dcdcdc;border:1px solid #f2f2f2;border-right-color:#bdbdbd;border-bottom-color:#bdbdbd"></div>
<svg class="a" style="left:1151.5px;top:482.5px" width="14" height="12" viewBox="0 0 14 12"><path d="M.5 6.500C3 2.500 11 2.500 13.500 6.500C11 10 3 10 .5 6.500Z" fill="#f4f4f4" stroke="#111" stroke-width="1"/><circle cx="7" cy="6.300" r="2.700" fill="#222"/><circle cx="6.200" cy="5.500" r=".8" fill="#ddd"/><path d="M1 4.500C3.500 1.500 10.500 1.500 13 4.500" fill="none" stroke="#111" stroke-width="1.300"/></svg>
<div class="a" style="left:1168px;top:480px;width:14px;height:18px;background:#dcdcdc;border:1px solid #f2f2f2;border-right-color:#bdbdbd;border-bottom-color:#bdbdbd"></div>
<svg class="a" style="left:1169px;top:482.5px" width="12" height="13" viewBox="0 0 12 13"><path d="M3.500 6V4C3.500 1 8.500 1 8.500 4V6" fill="none" stroke="#222" stroke-width="1.500"/><rect x="1.500" y="5.500" width="9" height="7" rx="1" fill="#555" stroke="#111"/><path d="M3 8H9M3 10H9" stroke="#999" stroke-width=".8"/></svg>
<div class="a" style="left:1184.7px;top:481px;width:4.2px;height:16px;background:#ea6a1c"></div>
<div class="a" style="left:1194px;top:479px;width:149px;height:19.5px;background:#dcdcdc;border-bottom:1px solid #c4c4c4"></div>
<svg class="a" style="left:1198px;top:484px" width="7" height="10"><path d="M.5 .5V9.500L6 5Z" fill="#f4f4f4" stroke="#777"/></svg>
<svg class="a" style="left:1211.5px;top:481px" width="16" height="16" viewBox="0 0 16 16"><rect x=".5" y=".5" width="15" height="15" fill="#fff" stroke="#111"/><path d="M1 8H15M1 11.500H15M5.500 8V11.500M10.500 8V11.500" stroke="#999" stroke-width=".8"/><rect x="6.500" y="9" width="1" height="1" fill="#888"/><rect x="11.500" y="9" width="1" height="1" fill="#888"/></svg>
<div class="t " style="left:1231.5px;top:483.7px;font-size:10px;letter-spacing:-0.04px;color:#111">Vorlage Vorderseite</div>
<svg class="a" style="left:1319px;top:483.5px" width="11" height="11" viewBox="0 0 11 11"><circle cx="5.500" cy="5.500" r="4.100" fill="#f4f4f4" stroke="#222" stroke-width="1"/></svg>
<div class="a" style="left:1150px;top:500px;width:16.5px;height:18px;background:#dcdcdc;border:1px solid #f2f2f2;border-right-color:#bdbdbd;border-bottom-color:#bdbdbd"></div>
<svg class="a" style="left:1151.5px;top:502.5px" width="14" height="12" viewBox="0 0 14 12"><path d="M.5 6.500C3 2.500 11 2.500 13.500 6.500C11 10 3 10 .5 6.500Z" fill="#f4f4f4" stroke="#111" stroke-width="1"/><circle cx="7" cy="6.300" r="2.700" fill="#222"/><circle cx="6.200" cy="5.500" r=".8" fill="#ddd"/><path d="M1 4.500C3.500 1.500 10.500 1.500 13 4.500" fill="none" stroke="#111" stroke-width="1.300"/></svg>
<div class="a" style="left:1168px;top:500px;width:14px;height:18px;background:#dcdcdc;border:1px solid #f2f2f2;border-right-color:#bdbdbd;border-bottom-color:#bdbdbd"></div>
<svg class="a" style="left:1169px;top:502.5px" width="12" height="13" viewBox="0 0 12 13"><path d="M3.500 6V4C3.500 1 8.500 1 8.500 4V6" fill="none" stroke="#222" stroke-width="1.500"/><rect x="1.500" y="5.500" width="9" height="7" rx="1" fill="#555" stroke="#111"/><path d="M3 8H9M3 10H9" stroke="#999" stroke-width=".8"/></svg>
<div class="a" style="left:1184.7px;top:501px;width:4.2px;height:16px;background:#ea6a1c"></div>
<div class="a" style="left:1194px;top:499px;width:149px;height:19.5px;background:#dcdcdc;border-bottom:1px solid #c4c4c4"></div>
<svg class="a" style="left:1198px;top:504px" width="7" height="10"><path d="M.5 .5V9.500L6 5Z" fill="#f4f4f4" stroke="#777"/></svg>
<svg class="a" style="left:1211.5px;top:501px" width="16" height="16" viewBox="0 0 16 16"><rect x=".5" y=".5" width="15" height="15" fill="#fff" stroke="#111"/><path d="M1 8H15M1 11.500H15M5.500 8V11.500M10.500 8V11.500" stroke="#999" stroke-width=".8"/><rect x="6.500" y="9" width="1" height="1" fill="#888"/><rect x="11.500" y="9" width="1" height="1" fill="#888"/></svg>
<div class="t " style="left:1231.5px;top:503.7px;font-size:10px;letter-spacing:-0.12px;color:#111">Vorlage Rückseite</div>
<svg class="a" style="left:1319px;top:503.5px" width="11" height="11" viewBox="0 0 11 11"><circle cx="5.500" cy="5.500" r="4.100" fill="#f4f4f4" stroke="#222" stroke-width="1"/></svg>
<div class="a" style="left:1193.5px;top:358.8px;width:1px;height:160px;background:#111"></div>
<div class="a" style="left:1149px;top:518.6px;width:194px;height:1px;background:#111"></div>
<div class="a" style="left:1149px;top:543px;width:195px;height:1px;background:#111"></div>
<div class="t " style="left:1158px;top:545.5px;font-size:10px;letter-spacing:-0.20px;">3 Ebenen</div>
<svg class="a" style="left:1227.0px;top:544.0px" width="16" height="16" viewBox="0 0 16 16"><circle cx="9" cy="9" r="4.500" fill="#e8e8e8" stroke="#999"/><path d="M9 9V5.500M9 9H12" stroke="#888"/><rect x="3" y="3.500" width="5" height="4" fill="#ddd" stroke="#aaa" stroke-width=".8"/></svg>
<svg class="a" style="left:1256.0px;top:544.0px" width="18" height="16" viewBox="0 0 18 16"><path d="M1 7H7M5 5L7 7L5 9" fill="none" stroke="#555" stroke-width="1.100"/><rect x="8.500" y="4.500" width="7" height="8" fill="#f0f0f0" stroke="#999"/><rect x="10" y="8.500" width="3.500" height="4" fill="#ddd" stroke="#999" stroke-width=".8"/></svg>
<svg class="a" style="left:1289.0px;top:544.5px" width="16" height="16" viewBox="0 0 16 16"><rect x="3.500" y="3.500" width="9" height="9" fill="#f6f6f6" stroke="#222"/><rect x="5.500" y="8" width="4.500" height="4.500" fill="#e0e0e0" stroke="#222" stroke-width=".9"/></svg>
<svg class="a" style="left:1320.0px;top:544.0px" width="16" height="16" viewBox="0 0 16 16"><path d="M4.500 5.500H11.500L11 14H5Z" fill="#f4f4f4" stroke="#333"/><path d="M3.500 4.500H12.500" stroke="#333" stroke-width="1.600"/><path d="M6.500 3H9.500" stroke="#333" stroke-width="1.400"/><path d="M6.500 7V12.500M8 7V12.500M9.500 7V12.500" stroke="#333" stroke-width=".8"/></svg>
<div class="a" style="left:1349px;top:549px;width:10px;height:10px;clip-path:polygon(100% 0,100% 100%,0 100%)"><div style="width:10px;height:10px;background-image:linear-gradient(90deg,#adadad 1px,transparent 1px);background-size:2px 2px;mask-image:linear-gradient(#000 1px,transparent 1px);mask-size:2px 2px;-webkit-mask-image:linear-gradient(#000 1px,transparent 1px);-webkit-mask-size:2px 2px"></div></div>
<div class="a" style="left:1147px;top:560px;width:214px;height:3.5px;background:#363636"></div>
<div class="a" style="left:1147px;top:563.5px;width:214px;height:17px;background:linear-gradient(#8f8f8f,#828282);border-top:1px solid #999;border-bottom:1px solid #4a4a4a"></div>
<div class="a" style="left:1147px;top:563.5px;width:58.5px;height:17.5px;background:linear-gradient(#eeeeee,#d6d6d6);border-top:1px solid #fafafa;border-right:1px solid #666"></div>
<div class="t " style="left:1154.2px;top:567.5px;font-size:10px;font-weight:bold;letter-spacing:-0.60px;color:#333;text-shadow:0 1px 0 #fff">Aussehen</div>
<div class="a" style="left:1206px;top:563.5px;width:48.5px;height:16px;background:linear-gradient(#9a9a9a,#7c7c7c);border-top:1px solid #adadad;border-right:1px solid #565656;border-left:1px solid #a6a6a6"></div>
<div class="t " style="left:1212.5px;top:567.5px;font-size:10px;font-weight:bold;letter-spacing:0.04px;color:#2a2a2a;text-shadow:0 1px 0 #a8a8a8">Verlauf</div>
<div class="a" style="left:1255px;top:563.5px;width:66.5px;height:16px;background:linear-gradient(#9a9a9a,#7c7c7c);border-top:1px solid #adadad;border-right:1px solid #565656;border-left:1px solid #a6a6a6"></div>
<div class="t " style="left:1261.4px;top:567.5px;font-size:10px;font-weight:bold;letter-spacing:-0.34px;color:#2a2a2a;text-shadow:0 1px 0 #a8a8a8">Transparenz</div>
<svg class="a" style="left:1343.5px;top:568.5px" width="14" height="8" viewBox="0 0 14 8"><path d="M0 1.5H4L2 4Z" fill="#2a2a2a"/><path d="M5.5 .5H13.5M5.5 2.5H13.5M5.5 4.5H13.5M5.5 6.5H13.5" stroke="#2a2a2a" stroke-width="1"/></svg>
<div class="a" style="left:1149px;top:581.8px;width:211.5px;height:1px;background:#111"></div>
<div class="a" style="left:1149px;top:582.8px;width:195px;height:100px;background:#dadada"></div>
<div class="a" style="left:1344px;top:582.8px;width:16.5px;height:100px;background:linear-gradient(90deg,#e2e2e2,#f2f2f2 40%,#e6e6e6)"></div>
<svg class="a" style="left:1348px;top:589.8px" width="8" height="5"><path d="M0 4.500H8L4 0Z" fill="#8c8c8c"/></svg>
<svg class="a" style="left:1348px;top:671.8px" width="8" height="5"><path d="M0 0H8L4 4.500Z" fill="#8c8c8c"/></svg>
<div class="a" style="left:1151px;top:585.3px;width:20.5px;height:19.5px;background:#fff;border:1px solid #111"></div>
<div class="t " style="left:1183.3px;top:590px;font-size:10.5px;font-weight:bold;letter-spacing:-0.32px;color:#111">Gruppe</div>
<div class="a" style="left:1149px;top:605.8px;width:195px;height:1px;background:#111"></div>
<div class="t " style="left:1183.3px;top:615.9px;font-size:10px;letter-spacing:0.22px;">Inhalt</div>
<div class="a" style="left:1149px;top:630.8px;width:195px;height:1px;background:#efefef"></div>
<div class="a" style="left:1150px;top:632px;width:19.5px;height:21.5px;background:#dcdcdc;border:1px solid #f4f4f4;border-right-color:#bbb;border-bottom-color:#bbb"></div>
<svg class="a" style="left:1152.5px;top:637px" width="14" height="12" viewBox="0 0 14 12"><path d="M.5 6.500C3 2.500 11 2.500 13.500 6.500C11 10 3 10 .5 6.500Z" fill="#f4f4f4" stroke="#555" stroke-width="1"/><circle cx="7" cy="6.300" r="2.700" fill="#666"/><circle cx="6.200" cy="5.500" r=".8" fill="#ddd"/><path d="M1 4.500C3.500 1.500 10.500 1.500 13 4.500" fill="none" stroke="#555" stroke-width="1.300"/></svg>
<div class="a" style="left:1170px;top:631.5px;width:1px;height:22.5px;background:#111"></div>
<div class="t " style="left:1184.3px;top:639px;font-size:10px;letter-spacing:0.28px;color:#1515d5;border-bottom:1px dotted #1515d5;padding-bottom:1px">Deckkraft:</div>
<div class="t " style="left:1238.3px;top:639px;font-size:10px;letter-spacing:-0.05px;">Standard</div>
<div class="a" style="left:1149px;top:654px;width:195px;height:1px;background:#111"></div>
<div class="a" style="left:1149px;top:682.3px;width:195px;height:1px;background:#111"></div>
<svg class="a" style="left:1156.7px;top:683.0px" width="16" height="16" viewBox="0 0 16 16"><rect x="3" y="3" width="10" height="10" fill="#444"/><rect x="6" y="6" width="4" height="4" fill="#bbb"/></svg>
<svg class="a" style="left:1190.7px;top:683.0px" width="16" height="16" viewBox="0 0 16 16"><rect x="3.500" y="3.500" width="9" height="9" fill="#fff" stroke="#444"/></svg>
<div class="t" style="left:1226px;top:682px;font-family:'Liberation Serif',serif;font-style:italic;font-weight:bold;font-size:15px;color:#222">fx</div>
<svg class="a" style="left:1240px;top:694px" width="4" height="4"><path d="M3.500 0V3.500H0Z" fill="#222"/></svg>
<svg class="a" style="left:1256.4px;top:683.0px" width="16" height="16" viewBox="0 0 16 16"><circle cx="8" cy="8" r="4.500" fill="#e8e8e8" stroke="#999" stroke-width="1.200"/><path d="M5 5L11 11" stroke="#999" stroke-width="1.200"/></svg>
<svg class="a" style="left:1290.6px;top:683.5px" width="16" height="16" viewBox="0 0 16 16"><rect x="3.500" y="3.500" width="9" height="9" fill="#f6f6f6" stroke="#9a9a9a"/><rect x="5.500" y="8" width="4.500" height="4.500" fill="#e0e0e0" stroke="#9a9a9a" stroke-width=".9"/></svg>
<svg class="a" style="left:1321.0px;top:683.0px" width="16" height="16" viewBox="0 0 16 16"><path d="M4.500 5.500H11.500L11 14H5Z" fill="#f4f4f4" stroke="#8a8a8a"/><path d="M3.500 4.500H12.500" stroke="#8a8a8a" stroke-width="1.600"/><path d="M6.500 3H9.500" stroke="#8a8a8a" stroke-width="1.400"/><path d="M6.500 7V12.500M8 7V12.500M9.500 7V12.500" stroke="#8a8a8a" stroke-width=".8"/></svg>
<div class="a" style="left:1349px;top:688px;width:10px;height:10px;clip-path:polygon(100% 0,100% 100%,0 100%)"><div style="width:10px;height:10px;background-image:linear-gradient(90deg,#adadad 1px,transparent 1px);background-size:2px 2px;mask-image:linear-gradient(#000 1px,transparent 1px);mask-size:2px 2px;-webkit-mask-image:linear-gradient(#000 1px,transparent 1px);-webkit-mask-size:2px 2px"></div></div>
<div class="a" style="left:1147px;top:699.5px;width:214px;height:3.5px;background:#363636"></div>
<div class="a" style="left:1147px;top:703px;width:214px;height:17px;background:linear-gradient(#8f8f8f,#828282);border-top:1px solid #999;border-bottom:1px solid #4a4a4a"></div>
<div class="a" style="left:1147px;top:703px;width:73px;height:17.5px;background:linear-gradient(#eeeeee,#d6d6d6);border-top:1px solid #fafafa;border-right:1px solid #666"></div>
<div class="t " style="left:1159.4px;top:707px;font-size:10px;font-weight:bold;letter-spacing:-0.28px;color:#333;text-shadow:0 1px 0 #fff">Ausrichten</div>
<div class="a" style="left:1220.5px;top:703px;width:64.0px;height:16px;background:linear-gradient(#9a9a9a,#7c7c7c);border-top:1px solid #adadad;border-right:1px solid #565656;border-left:1px solid #a6a6a6"></div>
<div class="t " style="left:1227.4px;top:707px;font-size:10px;font-weight:bold;letter-spacing:-0.11px;color:#2a2a2a;text-shadow:0 1px 0 #a8a8a8">Pathfinder</div>
<svg class="a" style="left:1343.5px;top:708px" width="14" height="8" viewBox="0 0 14 8"><path d="M0 1.5H4L2 4Z" fill="#2a2a2a"/><path d="M5.5 .5H13.5M5.5 2.5H13.5M5.5 4.5H13.5M5.5 6.5H13.5" stroke="#2a2a2a" stroke-width="1"/></svg>
<svg class="a" style="left:1151px;top:707px" width="6" height="10"><path d="M0 4H5.500L2.750 .5Z M0 6H5.500L2.750 9.500Z" fill="#222"/></svg>
<div class="a" style="left:1147px;top:720px;width:214px;height:3px;background:#f2f2f2"></div>
</body></html>
